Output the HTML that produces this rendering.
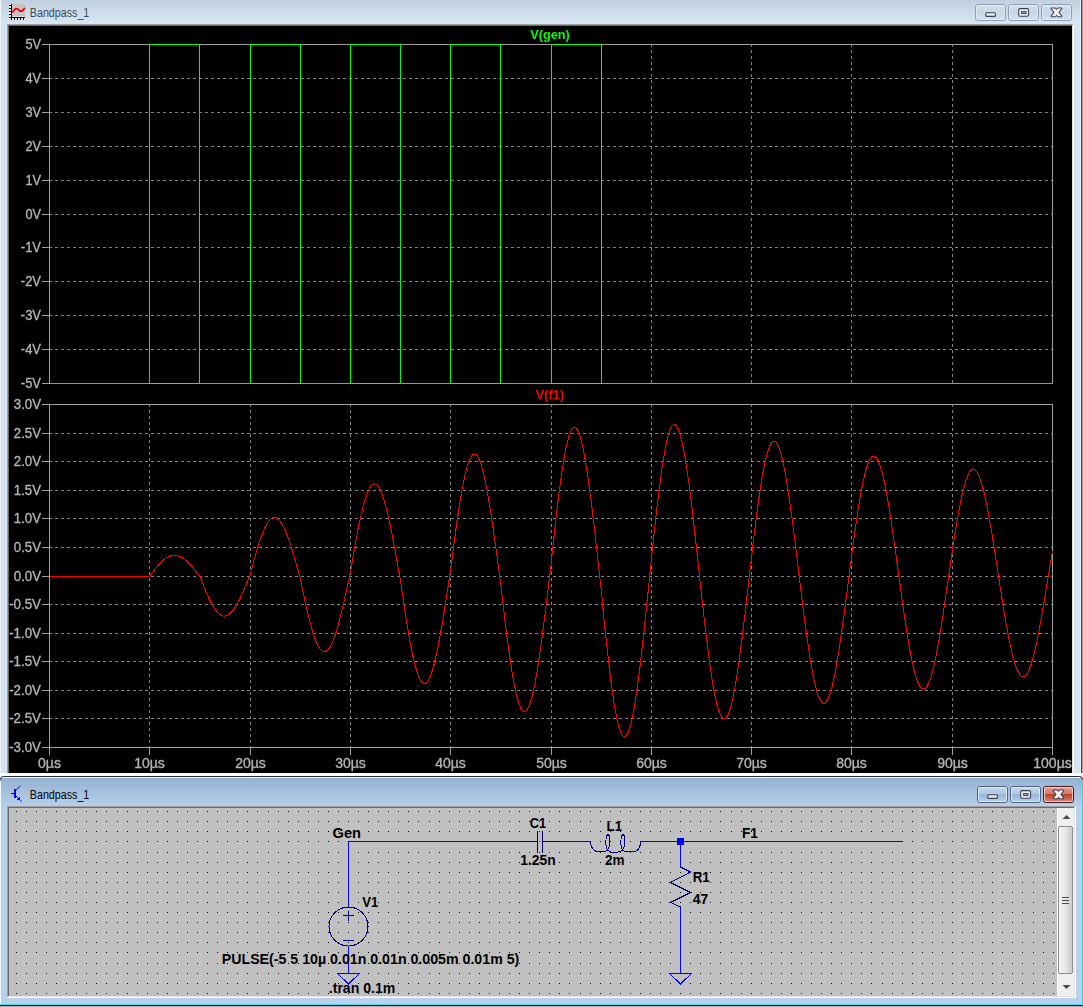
<!DOCTYPE html>
<html><head><meta charset="utf-8"><title>Bandpass_1</title>
<style>
html,body{margin:0;padding:0;width:1083px;height:1007px;overflow:hidden;background:#d6e3f1;}
svg{position:absolute;left:0;top:0;}
text{font-family:"Liberation Sans",sans-serif;}
</style></head><body>

<svg width="1083" height="1007" viewBox="0 0 1083 1007">
<defs>
<linearGradient id="tb1" x1="0" y1="0" x2="0" y2="1"><stop offset="0" stop-color="#c0d0df"/><stop offset="1" stop-color="#d9e6f3"/></linearGradient>
<linearGradient id="tb2" x1="0" y1="0" x2="0" y2="1"><stop offset="0" stop-color="#95b1d2"/><stop offset="1" stop-color="#b8d1ea"/></linearGradient>
<linearGradient id="btn1" x1="0" y1="0" x2="0" y2="1"><stop offset="0" stop-color="#d5e1ee"/><stop offset="0.5" stop-color="#c7d6e7"/><stop offset="1" stop-color="#d3e0ee"/></linearGradient>
<linearGradient id="btn2" x1="0" y1="0" x2="0" y2="1"><stop offset="0" stop-color="#c4d7ec"/><stop offset="0.45" stop-color="#b2cae5"/><stop offset="0.5" stop-color="#98b6d8"/><stop offset="1" stop-color="#b9d0ea"/></linearGradient>
<linearGradient id="btnc" x1="0" y1="0" x2="0" y2="1"><stop offset="0" stop-color="#e5a394"/><stop offset="0.45" stop-color="#d67a66"/><stop offset="0.5" stop-color="#c0402a"/><stop offset="1" stop-color="#d98b78"/></linearGradient>
<linearGradient id="thumb" x1="0" y1="0" x2="1" y2="0"><stop offset="0" stop-color="#f4f4f4"/><stop offset="0.5" stop-color="#e6e6e6"/><stop offset="1" stop-color="#c9c9cc"/></linearGradient>
</defs>
<g shape-rendering="crispEdges">
<rect x="0" y="0" width="1083" height="776" fill="#d6e3f1"/>
<rect x="0" y="0" width="1083" height="24" fill="url(#tb1)"/>
<rect x="0" y="0" width="1" height="776" fill="#eef1f6"/>
<rect x="1080" y="0" width="1" height="776" fill="#eef4fb"/>
<rect x="1081" y="0" width="1" height="776" fill="#404040"/>
<rect x="1082" y="0" width="1" height="776" fill="#aaaaaa"/>
<rect x="7" y="24" width="1067" height="752" fill="#ffffff"/>
<rect x="7" y="24" width="1066" height="751" fill="#a0a0a0"/>
<rect x="8" y="25" width="1065" height="750" fill="#e3e3e3"/>
<rect x="8" y="25" width="1064" height="749" fill="#696969"/>
<rect x="9" y="26" width="1063" height="747" fill="#000000"/>
</g>
<g shape-rendering="crispEdges">
<rect x="9" y="4" width="2" height="14" fill="#ececec"/>
<rect x="11" y="18" width="14" height="2" fill="#ececec"/>
<rect x="12" y="4" width="13" height="13" fill="#c3c3c3"/>
<rect x="12" y="16" width="13" height="1" fill="#dcdcdc"/>
<rect x="11" y="4" width="1" height="14" fill="#000"/>
<rect x="9" y="17" width="16" height="1" fill="#000"/>
<rect x="9" y="5" width="2" height="1" fill="#000"/><rect x="9" y="8" width="2" height="1" fill="#000"/><rect x="9" y="11" width="2" height="1" fill="#000"/><rect x="9" y="14" width="2" height="1" fill="#000"/>
<rect x="11" y="18" width="1" height="2" fill="#000"/><rect x="14" y="18" width="1" height="2" fill="#000"/><rect x="17" y="18" width="1" height="2" fill="#000"/><rect x="20" y="18" width="1" height="2" fill="#000"/><rect x="23" y="18" width="1" height="2" fill="#000"/>
</g>
<polyline points="12,12.5 15.5,8.8 17.5,8.8 20,11 22,11 25,8" fill="none" stroke="#ff0000" stroke-width="1.8"/>

<text x="29.8" y="17" font-size="12" fill="#3d4a5a" textLength="59.5" lengthAdjust="spacingAndGlyphs">Bandpass_1</text>
<rect x="975.5" y="4.5" width="30" height="16" rx="2.5" fill="url(#btn1)" stroke="#8c9db6" stroke-width="1"/><rect x="976.5" y="5.5" width="28" height="14" rx="1.5" fill="none" stroke="rgba(240,245,252,0.6)" stroke-width="1"/><rect x="1008.5" y="4.5" width="30" height="16" rx="2.5" fill="url(#btn1)" stroke="#8c9db6" stroke-width="1"/><rect x="1009.5" y="5.5" width="28" height="14" rx="1.5" fill="none" stroke="rgba(240,245,252,0.6)" stroke-width="1"/><rect x="1041.5" y="4.5" width="30" height="16" rx="2.5" fill="url(#btn1)" stroke="#8c9db6" stroke-width="1"/><rect x="1042.5" y="5.5" width="28" height="14" rx="1.5" fill="none" stroke="rgba(240,245,252,0.6)" stroke-width="1"/><rect x="985.8" y="12.8" width="9.6" height="3.6" rx="1" fill="#ececec" stroke="#3a4252" stroke-width="1.1"/><rect x="1018.7" y="8.6" width="9.8" height="7.6" rx="1.2" fill="#f0f0f0" stroke="#3a4252" stroke-width="1.1"/><rect x="1021.6" y="11.6" width="4.4" height="2" fill="#9bb3cf" stroke="#3a4252" stroke-width="1"/><g stroke="#3a4252" stroke-width="2" stroke-linejoin="round" fill="#3a4252"><polygon points="1051.55,8.55 1055.15,8.55 1061.35,16.15 1057.75,16.15"/><polygon points="1061.35,8.55 1057.75,8.55 1051.55,16.15 1055.15,16.15"/></g><g fill="#f6f6f6"><polygon points="1051.55,8.55 1055.15,8.55 1061.35,16.15 1057.75,16.15"/><polygon points="1061.35,8.55 1057.75,8.55 1051.55,16.15 1055.15,16.15"/></g>
<g shape-rendering="crispEdges">
<line x1="49" y1="78.5" x2="1052" y2="78.5" stroke="#808080" stroke-dasharray="3,3"/>
<line x1="49" y1="112.5" x2="1052" y2="112.5" stroke="#808080" stroke-dasharray="3,3"/>
<line x1="49" y1="146.5" x2="1052" y2="146.5" stroke="#808080" stroke-dasharray="3,3"/>
<line x1="49" y1="180.5" x2="1052" y2="180.5" stroke="#808080" stroke-dasharray="3,3"/>
<line x1="49" y1="214.5" x2="1052" y2="214.5" stroke="#808080" stroke-dasharray="3,3"/>
<line x1="49" y1="247.5" x2="1052" y2="247.5" stroke="#808080" stroke-dasharray="3,3"/>
<line x1="49" y1="281.5" x2="1052" y2="281.5" stroke="#808080" stroke-dasharray="3,3"/>
<line x1="49" y1="315.5" x2="1052" y2="315.5" stroke="#808080" stroke-dasharray="3,3"/>
<line x1="49" y1="349.5" x2="1052" y2="349.5" stroke="#808080" stroke-dasharray="3,3"/>
<line x1="149.5" y1="44" x2="149.5" y2="383" stroke="#808080" stroke-dasharray="3,3"/>
<line x1="250.5" y1="44" x2="250.5" y2="383" stroke="#808080" stroke-dasharray="3,3"/>
<line x1="350.5" y1="44" x2="350.5" y2="383" stroke="#808080" stroke-dasharray="3,3"/>
<line x1="450.5" y1="44" x2="450.5" y2="383" stroke="#808080" stroke-dasharray="3,3"/>
<line x1="551.5" y1="44" x2="551.5" y2="383" stroke="#808080" stroke-dasharray="3,3"/>
<line x1="651.5" y1="44" x2="651.5" y2="383" stroke="#808080" stroke-dasharray="3,3"/>
<line x1="751.5" y1="44" x2="751.5" y2="383" stroke="#808080" stroke-dasharray="3,3"/>
<line x1="851.5" y1="44" x2="851.5" y2="383" stroke="#808080" stroke-dasharray="3,3"/>
<line x1="952.5" y1="44" x2="952.5" y2="383" stroke="#808080" stroke-dasharray="3,3"/>
<rect x="49.5" y="44.5" width="1003" height="339" fill="none" stroke="#a0a0a0"/>
<line x1="42" y1="44.5" x2="49" y2="44.5" stroke="#a0a0a0"/>
<line x1="42" y1="78.5" x2="49" y2="78.5" stroke="#a0a0a0"/>
<line x1="42" y1="112.5" x2="49" y2="112.5" stroke="#a0a0a0"/>
<line x1="42" y1="146.5" x2="49" y2="146.5" stroke="#a0a0a0"/>
<line x1="42" y1="180.5" x2="49" y2="180.5" stroke="#a0a0a0"/>
<line x1="42" y1="214.5" x2="49" y2="214.5" stroke="#a0a0a0"/>
<line x1="42" y1="247.5" x2="49" y2="247.5" stroke="#a0a0a0"/>
<line x1="42" y1="281.5" x2="49" y2="281.5" stroke="#a0a0a0"/>
<line x1="42" y1="315.5" x2="49" y2="315.5" stroke="#a0a0a0"/>
<line x1="42" y1="349.5" x2="49" y2="349.5" stroke="#a0a0a0"/>
<line x1="42" y1="383.5" x2="49" y2="383.5" stroke="#a0a0a0"/>
<line x1="49" y1="433.5" x2="1052" y2="433.5" stroke="#808080" stroke-dasharray="3,3"/>
<line x1="49" y1="461.5" x2="1052" y2="461.5" stroke="#808080" stroke-dasharray="3,3"/>
<line x1="49" y1="490.5" x2="1052" y2="490.5" stroke="#808080" stroke-dasharray="3,3"/>
<line x1="49" y1="518.5" x2="1052" y2="518.5" stroke="#808080" stroke-dasharray="3,3"/>
<line x1="49" y1="547.5" x2="1052" y2="547.5" stroke="#808080" stroke-dasharray="3,3"/>
<line x1="49" y1="576.5" x2="1052" y2="576.5" stroke="#808080" stroke-dasharray="3,3"/>
<line x1="49" y1="604.5" x2="1052" y2="604.5" stroke="#808080" stroke-dasharray="3,3"/>
<line x1="49" y1="633.5" x2="1052" y2="633.5" stroke="#808080" stroke-dasharray="3,3"/>
<line x1="49" y1="661.5" x2="1052" y2="661.5" stroke="#808080" stroke-dasharray="3,3"/>
<line x1="49" y1="690.5" x2="1052" y2="690.5" stroke="#808080" stroke-dasharray="3,3"/>
<line x1="49" y1="718.5" x2="1052" y2="718.5" stroke="#808080" stroke-dasharray="3,3"/>
<line x1="149.5" y1="404" x2="149.5" y2="747" stroke="#808080" stroke-dasharray="3,3"/>
<line x1="250.5" y1="404" x2="250.5" y2="747" stroke="#808080" stroke-dasharray="3,3"/>
<line x1="350.5" y1="404" x2="350.5" y2="747" stroke="#808080" stroke-dasharray="3,3"/>
<line x1="450.5" y1="404" x2="450.5" y2="747" stroke="#808080" stroke-dasharray="3,3"/>
<line x1="551.5" y1="404" x2="551.5" y2="747" stroke="#808080" stroke-dasharray="3,3"/>
<line x1="651.5" y1="404" x2="651.5" y2="747" stroke="#808080" stroke-dasharray="3,3"/>
<line x1="751.5" y1="404" x2="751.5" y2="747" stroke="#808080" stroke-dasharray="3,3"/>
<line x1="851.5" y1="404" x2="851.5" y2="747" stroke="#808080" stroke-dasharray="3,3"/>
<line x1="952.5" y1="404" x2="952.5" y2="747" stroke="#808080" stroke-dasharray="3,3"/>
<rect x="49.5" y="404.5" width="1003" height="343" fill="none" stroke="#a0a0a0"/>
<line x1="42" y1="404.5" x2="49" y2="404.5" stroke="#a0a0a0"/>
<line x1="42" y1="433.5" x2="49" y2="433.5" stroke="#a0a0a0"/>
<line x1="42" y1="461.5" x2="49" y2="461.5" stroke="#a0a0a0"/>
<line x1="42" y1="490.5" x2="49" y2="490.5" stroke="#a0a0a0"/>
<line x1="42" y1="518.5" x2="49" y2="518.5" stroke="#a0a0a0"/>
<line x1="42" y1="547.5" x2="49" y2="547.5" stroke="#a0a0a0"/>
<line x1="42" y1="576.5" x2="49" y2="576.5" stroke="#a0a0a0"/>
<line x1="42" y1="604.5" x2="49" y2="604.5" stroke="#a0a0a0"/>
<line x1="42" y1="633.5" x2="49" y2="633.5" stroke="#a0a0a0"/>
<line x1="42" y1="661.5" x2="49" y2="661.5" stroke="#a0a0a0"/>
<line x1="42" y1="690.5" x2="49" y2="690.5" stroke="#a0a0a0"/>
<line x1="42" y1="718.5" x2="49" y2="718.5" stroke="#a0a0a0"/>
<line x1="42" y1="747.5" x2="49" y2="747.5" stroke="#a0a0a0"/>
<line x1="49.5" y1="747" x2="49.5" y2="755" stroke="#a0a0a0"/>
<line x1="149.5" y1="747" x2="149.5" y2="755" stroke="#a0a0a0"/>
<line x1="250.5" y1="747" x2="250.5" y2="755" stroke="#a0a0a0"/>
<line x1="350.5" y1="747" x2="350.5" y2="755" stroke="#a0a0a0"/>
<line x1="450.5" y1="747" x2="450.5" y2="755" stroke="#a0a0a0"/>
<line x1="551.5" y1="747" x2="551.5" y2="755" stroke="#a0a0a0"/>
<line x1="651.5" y1="747" x2="651.5" y2="755" stroke="#a0a0a0"/>
<line x1="751.5" y1="747" x2="751.5" y2="755" stroke="#a0a0a0"/>
<line x1="851.5" y1="747" x2="851.5" y2="755" stroke="#a0a0a0"/>
<line x1="952.5" y1="747" x2="952.5" y2="755" stroke="#a0a0a0"/>
<line x1="1052.5" y1="747" x2="1052.5" y2="755" stroke="#a0a0a0"/>
</g>
<polyline shape-rendering="crispEdges" fill="none" stroke="#00ff00" stroke-width="1" points="49.5,383.5 149.5,383.5 149.5,44.5 199.5,44.5 199.5,383.5 250.5,383.5 250.5,44.5 300.5,44.5 300.5,383.5 350.5,383.5 350.5,44.5 400.5,44.5 400.5,383.5 450.5,383.5 450.5,44.5 500.5,44.5 500.5,383.5 551.5,383.5 551.5,44.5 601.5,44.5 601.5,383.5 1052.5,383.5"/>
<polyline fill="none" stroke="#ff0000" stroke-width="1" shape-rendering="crispEdges" points="49.50,576.00 50.50,576.00 51.51,576.00 52.51,576.00 53.51,576.00 54.52,576.00 55.52,576.00 56.52,576.00 57.52,576.00 58.53,576.00 59.53,576.00 60.53,576.00 61.54,576.00 62.54,576.00 63.54,576.00 64.55,576.00 65.55,576.00 66.55,576.00 67.55,576.00 68.56,576.00 69.56,576.00 70.56,576.00 71.57,576.00 72.57,576.00 73.57,576.00 74.58,576.00 75.58,576.00 76.58,576.00 77.58,576.00 78.59,576.00 79.59,576.00 80.59,576.00 81.60,576.00 82.60,576.00 83.60,576.00 84.61,576.00 85.61,576.00 86.61,576.00 87.61,576.00 88.62,576.00 89.62,576.00 90.62,576.00 91.63,576.00 92.63,576.00 93.63,576.00 94.63,576.00 95.64,576.00 96.64,576.00 97.64,576.00 98.65,576.00 99.65,576.00 100.65,576.00 101.66,576.00 102.66,576.00 103.66,576.00 104.67,576.00 105.67,576.00 106.67,576.00 107.67,576.00 108.68,576.00 109.68,576.00 110.68,576.00 111.69,576.00 112.69,576.00 113.69,576.00 114.70,576.00 115.70,576.00 116.70,576.00 117.70,576.00 118.71,576.00 119.71,576.00 120.71,576.00 121.72,576.00 122.72,576.00 123.72,576.00 124.72,576.00 125.73,576.00 126.73,576.00 127.73,576.00 128.74,576.00 129.74,576.00 130.74,576.00 131.75,576.00 132.75,576.00 133.75,576.00 134.75,576.00 135.76,576.00 136.76,576.00 137.76,576.00 138.77,576.00 139.77,576.00 140.77,576.00 141.78,576.00 142.78,576.00 143.78,576.00 144.78,576.00 145.79,576.00 146.79,576.00 147.79,576.00 148.80,576.00 149.80,576.00 150.80,574.66 151.81,573.33 152.81,572.01 153.81,570.71 154.81,569.43 155.82,568.19 156.82,566.97 157.82,565.80 158.83,564.67 159.83,563.59 160.83,562.56 161.84,561.59 162.84,560.67 163.84,559.82 164.84,559.04 165.85,558.32 166.85,557.68 167.85,557.12 168.86,556.63 169.86,556.21 170.86,555.88 171.87,555.63 172.87,555.46 173.87,555.37 174.88,555.37 175.88,555.45 176.88,555.61 177.88,555.85 178.89,556.17 179.89,556.57 180.89,557.05 181.90,557.60 182.90,558.22 183.90,558.92 184.91,559.68 185.91,560.50 186.91,561.38 187.91,562.32 188.92,563.31 189.92,564.35 190.92,565.44 191.93,566.56 192.93,567.72 193.93,568.91 194.94,570.12 195.94,571.36 196.94,572.61 197.94,573.87 198.95,575.14 199.95,576.40 200.95,579.01 201.96,581.59 202.96,584.15 203.96,586.67 204.97,589.14 205.97,591.55 206.97,593.90 207.97,596.16 208.98,598.34 209.98,600.43 210.98,602.42 211.99,604.29 212.99,606.05 213.99,607.68 215.00,609.18 216.00,610.55 217.00,611.77 218.00,612.85 219.01,613.78 220.01,614.56 221.01,615.18 222.02,615.64 223.02,615.95 224.02,616.09 225.03,616.07 226.03,615.90 227.03,615.56 228.03,615.07 229.04,614.42 230.04,613.62 231.04,612.67 232.05,611.58 233.05,610.34 234.05,608.98 235.06,607.48 236.06,605.87 237.06,604.13 238.06,602.29 239.07,600.35 240.07,598.31 241.07,596.20 242.08,594.00 243.08,591.74 244.08,589.42 245.09,587.05 246.09,584.65 247.09,582.21 248.09,579.76 249.10,577.30 250.10,574.84 251.10,571.04 252.11,567.28 253.11,563.56 254.11,559.90 255.12,556.31 256.12,552.81 257.12,549.40 258.12,546.12 259.13,542.96 260.13,539.94 261.13,537.07 262.14,534.36 263.14,531.83 264.14,529.47 265.14,527.31 266.15,525.35 267.15,523.60 268.15,522.06 269.16,520.74 270.16,519.64 271.16,518.77 272.17,518.13 273.17,517.72 274.17,517.55 275.18,517.61 276.18,517.90 277.18,518.43 278.18,519.18 279.19,520.16 280.19,521.36 281.19,522.77 282.20,524.40 283.20,526.22 284.20,528.24 285.21,530.45 286.21,532.84 287.21,535.39 288.21,538.09 289.22,540.95 290.22,543.93 291.22,547.04 292.23,550.25 293.23,553.56 294.23,556.95 295.24,560.41 296.24,563.93 297.24,567.48 298.24,571.06 299.25,574.65 300.25,578.24 301.25,583.15 302.26,588.02 303.26,592.83 304.26,597.57 305.27,602.20 306.27,606.72 307.27,611.11 308.27,615.35 309.28,619.42 310.28,623.31 311.28,626.99 312.29,630.47 313.29,633.72 314.29,636.73 315.30,639.50 316.30,642.00 317.30,644.23 318.30,646.19 319.31,647.86 320.31,649.24 321.31,650.32 322.32,651.11 323.32,651.59 324.32,651.77 325.32,651.65 326.33,651.22 327.33,650.50 328.33,649.48 329.34,648.16 330.34,646.57 331.34,644.69 332.35,642.55 333.35,640.14 334.35,637.49 335.36,634.59 336.36,631.47 337.36,628.13 338.36,624.59 339.37,620.87 340.37,616.98 341.37,612.93 342.38,608.74 343.38,604.44 344.38,600.03 345.39,595.53 346.39,590.97 347.39,586.36 348.39,581.71 349.40,577.06 350.40,572.41 351.40,566.44 352.41,560.53 353.41,554.70 354.41,548.96 355.42,543.34 356.42,537.87 357.42,532.56 358.42,527.44 359.43,522.53 360.43,517.84 361.43,513.39 362.44,509.20 363.44,505.29 364.44,501.68 365.44,498.36 366.45,495.37 367.45,492.70 368.45,490.38 369.46,488.40 370.46,486.77 371.46,485.51 372.47,484.61 373.47,484.07 374.47,483.91 375.48,484.11 376.48,484.68 377.48,485.61 378.48,486.91 379.49,488.55 380.49,490.54 381.49,492.87 382.50,495.52 383.50,498.49 384.50,501.76 385.50,505.32 386.51,509.16 387.51,513.25 388.51,517.58 389.52,522.14 390.52,526.90 391.52,531.84 392.53,536.95 393.53,542.21 394.53,547.58 395.54,553.06 396.54,558.62 397.54,564.23 398.54,569.88 399.55,575.54 400.55,581.18 401.55,588.14 402.56,595.03 403.56,601.82 404.56,608.50 405.56,615.03 406.57,621.39 407.57,627.56 408.57,633.50 409.58,639.20 410.58,644.64 411.58,649.78 412.59,654.62 413.59,659.14 414.59,663.31 415.60,667.13 416.60,670.57 417.60,673.63 418.60,676.28 419.61,678.54 420.61,680.37 421.61,681.79 422.62,682.78 423.62,683.34 424.62,683.47 425.62,683.17 426.63,682.45 427.63,681.30 428.63,679.73 429.64,677.75 430.64,675.37 431.64,672.60 432.65,669.45 433.65,665.94 434.65,662.07 435.65,657.87 436.66,653.35 437.66,648.53 438.66,643.44 439.67,638.09 440.67,632.50 441.67,626.70 442.68,620.71 443.68,614.55 444.68,608.26 445.69,601.85 446.69,595.36 447.69,588.80 448.69,582.21 449.70,575.60 450.70,569.02 451.70,561.13 452.71,553.33 453.71,545.63 454.71,538.07 455.71,530.69 456.72,523.50 457.72,516.53 458.72,509.82 459.73,503.39 460.73,497.27 461.73,491.47 462.74,486.03 463.74,480.96 464.74,476.28 465.75,472.01 466.75,468.16 467.75,464.75 468.75,461.80 469.76,459.31 470.76,457.29 471.76,455.75 472.77,454.69 473.77,454.12 474.77,454.04 475.77,454.45 476.78,455.34 477.78,456.71 478.78,458.55 479.79,460.86 480.79,463.63 481.79,466.83 482.80,470.46 483.80,474.51 484.80,478.95 485.81,483.77 486.81,488.95 487.81,494.46 488.81,500.29 489.82,506.40 490.82,512.78 491.82,519.39 492.83,526.22 493.83,533.23 494.83,540.39 495.84,547.68 496.84,555.06 497.84,562.51 498.84,570.00 499.85,577.49 500.85,584.96 501.85,593.72 502.86,602.38 503.86,610.93 504.86,619.31 505.87,627.49 506.87,635.46 507.87,643.16 508.87,650.58 509.88,657.69 510.88,664.45 511.88,670.84 512.89,676.84 513.89,682.43 514.89,687.57 515.90,692.26 516.90,696.47 517.90,700.19 518.90,703.41 519.91,706.10 520.91,708.28 521.91,709.92 522.92,711.02 523.92,711.58 524.92,711.59 525.92,711.07 526.93,710.01 527.93,708.41 528.93,706.29 529.94,703.65 530.94,700.51 531.94,696.88 532.95,692.78 533.95,688.22 534.95,683.22 535.95,677.80 536.96,671.99 537.96,665.81 538.96,659.29 539.97,652.45 540.97,645.32 541.97,637.93 542.98,630.31 543.98,622.49 544.98,614.51 545.99,606.38 546.99,598.16 547.99,589.87 548.99,581.54 550.00,573.21 551.00,564.91 552.00,555.33 553.01,545.86 554.01,536.53 555.01,527.38 556.01,518.44 557.02,509.76 558.02,501.36 559.02,493.28 560.03,485.55 561.03,478.19 562.03,471.25 563.04,464.74 564.04,458.69 565.04,453.12 566.05,448.06 567.05,443.52 568.05,439.52 569.05,436.07 570.06,433.19 571.06,430.89 572.06,429.17 573.07,428.04 574.07,427.51 575.07,427.57 576.08,428.23 577.08,429.47 578.08,431.29 579.08,433.69 580.09,436.65 581.09,440.16 582.09,444.21 583.10,448.77 584.10,453.83 585.10,459.36 586.11,465.35 587.11,471.77 588.11,478.59 589.11,485.78 590.12,493.31 591.12,501.16 592.12,509.28 593.13,517.66 594.13,526.25 595.13,535.01 596.13,543.92 597.14,552.94 598.14,562.03 599.14,571.15 600.15,580.27 601.15,589.35 602.15,599.70 603.16,609.93 604.16,620.00 605.16,629.87 606.16,639.50 607.17,648.85 608.17,657.89 609.17,666.59 610.18,674.90 611.18,682.80 612.18,690.25 613.19,697.23 614.19,703.71 615.19,709.66 616.20,715.07 617.20,719.90 618.20,724.15 619.20,727.80 620.21,730.84 621.21,733.25 622.21,735.02 623.22,736.16 624.22,736.65 625.22,736.50 626.23,735.71 627.23,734.28 628.23,732.23 629.23,729.56 630.24,726.27 631.24,722.40 632.24,717.95 633.25,712.95 634.25,707.40 635.25,701.35 636.26,694.81 637.26,687.81 638.26,680.39 639.26,672.56 640.27,664.36 641.27,655.83 642.27,647.01 643.28,637.91 644.28,628.60 645.28,619.09 646.28,609.44 647.29,599.67 648.29,589.84 649.29,579.97 650.30,570.10 651.30,560.29 652.30,550.56 653.31,540.95 654.31,531.51 655.31,522.27 656.32,513.26 657.32,504.53 658.32,496.10 659.32,488.01 660.33,480.29 661.33,472.97 662.33,466.08 663.34,459.65 664.34,453.69 665.34,448.24 666.35,443.31 667.35,438.92 668.35,435.09 669.35,431.83 670.36,429.15 671.36,427.07 672.36,425.59 673.37,424.71 674.37,424.44 675.37,424.77 676.38,425.71 677.38,427.24 678.38,429.37 679.38,432.08 680.39,435.35 681.39,439.18 682.39,443.55 683.40,448.43 684.40,453.81 685.40,459.67 686.40,465.98 687.41,472.72 688.41,479.85 689.41,487.34 690.42,495.18 691.42,503.32 692.42,511.73 693.43,520.37 694.43,529.22 695.43,538.24 696.44,547.38 697.44,556.62 698.44,565.91 699.44,575.22 700.45,584.52 701.45,593.75 702.45,602.90 703.46,611.91 704.46,620.76 705.46,629.42 706.47,637.83 707.47,645.98 708.47,653.84 709.47,661.36 710.48,668.52 711.48,675.30 712.48,681.67 713.49,687.60 714.49,693.06 715.49,698.05 716.50,702.54 717.50,706.52 718.50,709.96 719.50,712.86 720.51,715.20 721.51,716.99 722.51,718.21 723.52,718.85 724.52,718.93 725.52,718.43 726.52,717.37 727.53,715.74 728.53,713.56 729.53,710.84 730.54,707.58 731.54,703.80 732.54,699.53 733.55,694.77 734.55,689.55 735.55,683.88 736.55,677.80 737.56,671.33 738.56,664.49 739.56,657.31 740.57,649.82 741.57,642.06 742.57,634.05 743.58,625.83 744.58,617.43 745.58,608.89 746.59,600.23 747.59,591.49 748.59,582.72 749.59,573.94 750.60,565.18 751.60,556.50 752.60,547.90 753.61,539.45 754.61,531.15 755.61,523.06 756.62,515.20 757.62,507.59 758.62,500.28 759.62,493.29 760.63,486.65 761.63,480.37 762.63,474.50 763.64,469.04 764.64,464.02 765.64,459.47 766.64,455.39 767.65,451.80 768.65,448.71 769.65,446.14 770.66,444.09 771.66,442.58 772.66,441.60 773.67,441.17 774.67,441.27 775.67,441.91 776.67,443.08 777.68,444.78 778.68,447.00 779.68,449.73 780.69,452.96 781.69,456.68 782.69,460.86 783.70,465.49 784.70,470.55 785.70,476.02 786.71,481.88 787.71,488.10 788.71,494.65 789.71,501.52 790.72,508.67 791.72,516.07 792.72,523.69 793.73,531.50 794.73,539.47 795.73,547.57 796.74,555.76 797.74,564.02 798.74,572.30 799.74,580.58 800.75,588.82 801.75,596.99 802.75,605.06 803.76,612.99 804.76,620.76 805.76,628.33 806.76,635.67 807.77,642.76 808.77,649.56 809.77,656.05 810.78,662.21 811.78,668.01 812.78,673.43 813.79,678.45 814.79,683.04 815.79,687.20 816.79,690.90 817.80,694.14 818.80,696.90 819.80,699.16 820.81,700.94 821.81,702.20 822.81,702.96 823.82,703.21 824.82,702.96 825.82,702.19 826.83,700.93 827.83,699.16 828.83,696.91 829.83,694.19 830.84,690.99 831.84,687.35 832.84,683.27 833.85,678.77 834.85,673.87 835.85,668.59 836.86,662.95 837.86,656.98 838.86,650.70 839.86,644.14 840.87,637.32 841.87,630.27 842.87,623.02 843.88,615.60 844.88,608.04 845.88,600.36 846.89,592.61 847.89,584.82 848.89,577.00 849.89,569.20 850.90,561.44 851.90,553.76 852.90,546.19 853.91,538.76 854.91,531.49 855.91,524.41 856.91,517.56 857.92,510.96 858.92,504.63 859.92,498.60 860.93,492.90 861.93,487.54 862.93,482.55 863.94,477.94 864.94,473.73 865.94,469.95 866.95,466.59 867.95,463.68 868.95,461.23 869.95,459.24 870.96,457.72 871.96,456.67 872.96,456.11 873.97,456.03 874.97,456.42 875.97,457.29 876.98,458.64 877.98,460.45 878.98,462.71 879.98,465.43 880.99,468.58 881.99,472.15 882.99,476.13 884.00,480.49 885.00,485.23 886.00,490.32 887.01,495.74 888.01,501.47 889.01,507.48 890.01,513.75 891.02,520.26 892.02,526.97 893.02,533.86 894.03,540.91 895.03,548.08 896.03,555.34 897.04,562.67 898.04,570.03 899.04,577.40 900.04,584.75 901.05,592.05 902.05,599.26 903.05,606.37 904.06,613.34 905.06,620.14 906.06,626.75 907.07,633.14 908.07,639.29 909.07,645.17 910.07,650.76 911.08,656.04 912.08,660.98 913.08,665.58 914.09,669.81 915.09,673.65 916.09,677.09 917.10,680.13 918.10,682.73 919.10,684.91 920.10,686.65 921.11,687.94 922.11,688.78 923.11,689.17 924.12,689.10 925.12,688.59 926.12,687.62 927.12,686.21 928.13,684.37 929.13,682.09 930.13,679.40 931.14,676.30 932.14,672.81 933.14,668.94 934.15,664.71 935.15,660.13 936.15,655.23 937.16,650.02 938.16,644.53 939.16,638.78 940.16,632.79 941.17,626.59 942.17,620.20 943.17,613.65 944.18,606.96 945.18,600.17 946.18,593.29 947.18,586.37 948.19,579.41 949.19,572.46 950.19,565.55 951.20,558.68 952.20,551.91 953.20,545.25 954.21,538.72 955.21,532.36 956.21,526.19 957.22,520.23 958.22,514.51 959.22,509.05 960.22,503.86 961.23,498.98 962.23,494.42 963.23,490.19 964.24,486.32 965.24,482.81 966.24,479.69 967.25,476.95 968.25,474.62 969.25,472.70 970.25,471.19 971.26,470.11 972.26,469.45 973.26,469.22 974.27,469.42 975.27,470.04 976.27,471.09 977.28,472.55 978.28,474.42 979.28,476.69 980.28,479.35 981.29,482.40 982.29,485.81 983.29,489.57 984.30,493.67 985.30,498.08 986.30,502.80 987.31,507.80 988.31,513.06 989.31,518.56 990.31,524.27 991.32,530.18 992.32,536.26 993.32,542.48 994.33,548.83 995.33,555.26 996.33,561.76 997.34,568.31 998.34,574.87 999.34,581.42 1000.34,587.93 1001.35,594.38 1002.35,600.74 1003.35,606.99 1004.36,613.09 1005.36,619.04 1006.36,624.80 1007.37,630.35 1008.37,635.67 1009.37,640.74 1010.37,645.54 1011.38,650.06 1012.38,654.26 1013.38,658.14 1014.39,661.69 1015.39,664.88 1016.39,667.72 1017.39,670.17 1018.40,672.25 1019.40,673.94 1020.40,675.23 1021.41,676.13 1022.41,676.62 1023.41,676.71 1024.42,676.39 1025.42,675.68 1026.42,674.57 1027.43,673.07 1028.43,671.18 1029.43,668.92 1030.43,666.29 1031.44,663.31 1032.44,659.99 1033.44,656.33 1034.45,652.37 1035.45,648.11 1036.45,643.57 1037.46,638.78 1038.46,633.74 1039.46,628.49 1040.46,623.04 1041.47,617.41 1042.47,611.63 1043.47,605.72 1044.48,599.71 1045.48,593.62 1046.48,587.47 1047.49,581.28 1048.49,575.10 1049.49,568.93 1050.49,562.80 1051.50,556.74 1052.50,550.77"/>
<g shape-rendering="crispEdges">
<rect x="0" y="773" width="1083" height="3" fill="#ffffff"/>
<path d="M0,1007 L0,780 L4,776 L1079,776 L1083,780 L1083,1007 Z" fill="#b9d1ea"/>
<rect x="0" y="778" width="1083" height="29" fill="url(#tb2)"/>
<rect x="3" y="777" width="1077" height="1" fill="#eef5fc"/>
</g>
<path d="M0.5,780 L0.5,779.5 Q0.5,776.5 3.5,776.5 L1079.5,776.5 Q1082.5,776.5 1082.5,779.5 L1082.5,780" fill="none" stroke="#2a2f36" stroke-width="1"/>
<g shape-rendering="crispEdges">
<rect x="0" y="781" width="1" height="223" fill="#f4f7fb"/>
<rect x="1082" y="781" width="1" height="224" fill="#33d2f0"/>
<rect x="0" y="1004" width="1083" height="1" fill="#3fdcf4"/>
<rect x="0" y="1005" width="1083" height="1" fill="#111111"/>
<rect x="0" y="1006" width="1083" height="1" fill="#a8a8a8"/>
<rect x="7" y="806" width="1069" height="192" fill="#ffffff"/>
<rect x="7" y="806" width="1068" height="191" fill="#a0a0a0"/>
<rect x="8" y="807" width="1067" height="190" fill="#e3e3e3"/>
<rect x="8" y="807" width="1066" height="189" fill="#696969"/>
<rect x="9" y="808" width="1048" height="188" fill="#c0c0c0"/>
<rect x="1057" y="808" width="17" height="188" fill="#efefef"/>
<rect x="1057" y="808" width="1" height="188" fill="#fbfbfb"/>
<rect x="1058.5" y="826.5" width="14" height="147" rx="2" fill="url(#thumb)" stroke="#8e8e8e"/>
</g>
<path d="M1062.5,819 L1066.5,815 L1070.5,819 Z" fill="#4a4a4a"/>
<path d="M1062.5,985 L1066.5,989 L1070.5,985 Z" fill="#4a4a4a"/>
<g shape-rendering="crispEdges" fill="#4a4a4a"><rect x="1062" y="897" width="7" height="1"/><rect x="1062" y="900" width="7" height="1"/><rect x="1062" y="903" width="7" height="1"/></g>
<g stroke="#0000ff" fill="none" stroke-width="1"><path d="M11,793.5 L15,793.5 M16,790 L20.5,786 M16,796 L21.5,801.5"/></g>
<g shape-rendering="crispEdges" fill="#0000ff"><rect x="14" y="789" width="2" height="9"/><rect x="18" y="798" width="2" height="2"/><rect x="19" y="797" width="1" height="1"/><rect x="17" y="799" width="2" height="1"/></g>
<text x="29.8" y="799" font-size="12" fill="#000000" textLength="59.5" lengthAdjust="spacingAndGlyphs">Bandpass_1</text>
<rect x="977.5" y="786.5" width="30" height="16" rx="2.5" fill="url(#btn2)" stroke="#4f6281" stroke-width="1"/><rect x="978.5" y="787.5" width="28" height="14" rx="1.5" fill="none" stroke="rgba(235,243,252,0.8)" stroke-width="1"/><rect x="1010.5" y="786.5" width="30" height="16" rx="2.5" fill="url(#btn2)" stroke="#4f6281" stroke-width="1"/><rect x="1011.5" y="787.5" width="28" height="14" rx="1.5" fill="none" stroke="rgba(235,243,252,0.8)" stroke-width="1"/><rect x="1043.5" y="786.5" width="30" height="16" rx="2.5" fill="url(#btnc)" stroke="#4a1322" stroke-width="1"/><rect x="1044.5" y="787.5" width="28" height="14" rx="1.5" fill="none" stroke="rgba(255,230,220,0.75)" stroke-width="1"/><rect x="987.8" y="794.8" width="9.6" height="3.6" rx="1" fill="#ececec" stroke="#3a4252" stroke-width="1.1"/><rect x="1020.7" y="790.6" width="9.8" height="7.6" rx="1.2" fill="#f0f0f0" stroke="#3a4252" stroke-width="1.1"/><rect x="1023.6" y="793.6" width="4.4" height="2" fill="#9bb3cf" stroke="#3a4252" stroke-width="1"/><g stroke="#3a4252" stroke-width="2" stroke-linejoin="round" fill="#3a4252"><polygon points="1053.55,790.55 1057.15,790.55 1063.35,798.15 1059.75,798.15"/><polygon points="1063.35,790.55 1059.75,790.55 1053.55,798.15 1057.15,798.15"/></g><g fill="#f6f6f6"><polygon points="1053.55,790.55 1057.15,790.55 1063.35,798.15 1059.75,798.15"/><polygon points="1063.35,790.55 1059.75,790.55 1053.55,798.15 1057.15,798.15"/></g>
<path shape-rendering="crispEdges" fill="#000" d="M16,811h1v1h-1zM26,811h1v1h-1zM36,811h1v1h-1zM46,811h1v1h-1zM56,811h1v1h-1zM66,811h1v1h-1zM76,811h1v1h-1zM86,811h1v1h-1zM96,811h1v1h-1zM106,811h1v1h-1zM117,811h1v1h-1zM127,811h1v1h-1zM137,811h1v1h-1zM147,811h1v1h-1zM157,811h1v1h-1zM167,811h1v1h-1zM177,811h1v1h-1zM187,811h1v1h-1zM197,811h1v1h-1zM207,811h1v1h-1zM217,811h1v1h-1zM227,811h1v1h-1zM237,811h1v1h-1zM247,811h1v1h-1zM257,811h1v1h-1zM268,811h1v1h-1zM278,811h1v1h-1zM288,811h1v1h-1zM298,811h1v1h-1zM308,811h1v1h-1zM318,811h1v1h-1zM328,811h1v1h-1zM338,811h1v1h-1zM348,811h1v1h-1zM358,811h1v1h-1zM368,811h1v1h-1zM378,811h1v1h-1zM388,811h1v1h-1zM398,811h1v1h-1zM408,811h1v1h-1zM418,811h1v1h-1zM429,811h1v1h-1zM439,811h1v1h-1zM449,811h1v1h-1zM459,811h1v1h-1zM469,811h1v1h-1zM479,811h1v1h-1zM489,811h1v1h-1zM499,811h1v1h-1zM509,811h1v1h-1zM519,811h1v1h-1zM529,811h1v1h-1zM539,811h1v1h-1zM549,811h1v1h-1zM559,811h1v1h-1zM569,811h1v1h-1zM580,811h1v1h-1zM590,811h1v1h-1zM600,811h1v1h-1zM610,811h1v1h-1zM620,811h1v1h-1zM630,811h1v1h-1zM640,811h1v1h-1zM650,811h1v1h-1zM660,811h1v1h-1zM670,811h1v1h-1zM680,811h1v1h-1zM690,811h1v1h-1zM700,811h1v1h-1zM710,811h1v1h-1zM720,811h1v1h-1zM731,811h1v1h-1zM741,811h1v1h-1zM751,811h1v1h-1zM761,811h1v1h-1zM771,811h1v1h-1zM781,811h1v1h-1zM791,811h1v1h-1zM801,811h1v1h-1zM811,811h1v1h-1zM821,811h1v1h-1zM831,811h1v1h-1zM841,811h1v1h-1zM851,811h1v1h-1zM861,811h1v1h-1zM871,811h1v1h-1zM882,811h1v1h-1zM892,811h1v1h-1zM902,811h1v1h-1zM912,811h1v1h-1zM922,811h1v1h-1zM932,811h1v1h-1zM942,811h1v1h-1zM952,811h1v1h-1zM962,811h1v1h-1zM972,811h1v1h-1zM982,811h1v1h-1zM992,811h1v1h-1zM1002,811h1v1h-1zM1012,811h1v1h-1zM1022,811h1v1h-1zM1033,811h1v1h-1zM1043,811h1v1h-1zM1053,811h1v1h-1zM16,821h1v1h-1zM26,821h1v1h-1zM36,821h1v1h-1zM46,821h1v1h-1zM56,821h1v1h-1zM66,821h1v1h-1zM76,821h1v1h-1zM86,821h1v1h-1zM96,821h1v1h-1zM106,821h1v1h-1zM117,821h1v1h-1zM127,821h1v1h-1zM137,821h1v1h-1zM147,821h1v1h-1zM157,821h1v1h-1zM167,821h1v1h-1zM177,821h1v1h-1zM187,821h1v1h-1zM197,821h1v1h-1zM207,821h1v1h-1zM217,821h1v1h-1zM227,821h1v1h-1zM237,821h1v1h-1zM247,821h1v1h-1zM257,821h1v1h-1zM268,821h1v1h-1zM278,821h1v1h-1zM288,821h1v1h-1zM298,821h1v1h-1zM308,821h1v1h-1zM318,821h1v1h-1zM328,821h1v1h-1zM338,821h1v1h-1zM348,821h1v1h-1zM358,821h1v1h-1zM368,821h1v1h-1zM378,821h1v1h-1zM388,821h1v1h-1zM398,821h1v1h-1zM408,821h1v1h-1zM418,821h1v1h-1zM429,821h1v1h-1zM439,821h1v1h-1zM449,821h1v1h-1zM459,821h1v1h-1zM469,821h1v1h-1zM479,821h1v1h-1zM489,821h1v1h-1zM499,821h1v1h-1zM509,821h1v1h-1zM519,821h1v1h-1zM529,821h1v1h-1zM539,821h1v1h-1zM549,821h1v1h-1zM559,821h1v1h-1zM569,821h1v1h-1zM580,821h1v1h-1zM590,821h1v1h-1zM600,821h1v1h-1zM610,821h1v1h-1zM620,821h1v1h-1zM630,821h1v1h-1zM640,821h1v1h-1zM650,821h1v1h-1zM660,821h1v1h-1zM670,821h1v1h-1zM680,821h1v1h-1zM690,821h1v1h-1zM700,821h1v1h-1zM710,821h1v1h-1zM720,821h1v1h-1zM731,821h1v1h-1zM741,821h1v1h-1zM751,821h1v1h-1zM761,821h1v1h-1zM771,821h1v1h-1zM781,821h1v1h-1zM791,821h1v1h-1zM801,821h1v1h-1zM811,821h1v1h-1zM821,821h1v1h-1zM831,821h1v1h-1zM841,821h1v1h-1zM851,821h1v1h-1zM861,821h1v1h-1zM871,821h1v1h-1zM882,821h1v1h-1zM892,821h1v1h-1zM902,821h1v1h-1zM912,821h1v1h-1zM922,821h1v1h-1zM932,821h1v1h-1zM942,821h1v1h-1zM952,821h1v1h-1zM962,821h1v1h-1zM972,821h1v1h-1zM982,821h1v1h-1zM992,821h1v1h-1zM1002,821h1v1h-1zM1012,821h1v1h-1zM1022,821h1v1h-1zM1033,821h1v1h-1zM1043,821h1v1h-1zM1053,821h1v1h-1zM16,831h1v1h-1zM26,831h1v1h-1zM36,831h1v1h-1zM46,831h1v1h-1zM56,831h1v1h-1zM66,831h1v1h-1zM76,831h1v1h-1zM86,831h1v1h-1zM96,831h1v1h-1zM106,831h1v1h-1zM117,831h1v1h-1zM127,831h1v1h-1zM137,831h1v1h-1zM147,831h1v1h-1zM157,831h1v1h-1zM167,831h1v1h-1zM177,831h1v1h-1zM187,831h1v1h-1zM197,831h1v1h-1zM207,831h1v1h-1zM217,831h1v1h-1zM227,831h1v1h-1zM237,831h1v1h-1zM247,831h1v1h-1zM257,831h1v1h-1zM268,831h1v1h-1zM278,831h1v1h-1zM288,831h1v1h-1zM298,831h1v1h-1zM308,831h1v1h-1zM318,831h1v1h-1zM328,831h1v1h-1zM338,831h1v1h-1zM348,831h1v1h-1zM358,831h1v1h-1zM368,831h1v1h-1zM378,831h1v1h-1zM388,831h1v1h-1zM398,831h1v1h-1zM408,831h1v1h-1zM418,831h1v1h-1zM429,831h1v1h-1zM439,831h1v1h-1zM449,831h1v1h-1zM459,831h1v1h-1zM469,831h1v1h-1zM479,831h1v1h-1zM489,831h1v1h-1zM499,831h1v1h-1zM509,831h1v1h-1zM519,831h1v1h-1zM529,831h1v1h-1zM539,831h1v1h-1zM549,831h1v1h-1zM559,831h1v1h-1zM569,831h1v1h-1zM580,831h1v1h-1zM590,831h1v1h-1zM600,831h1v1h-1zM610,831h1v1h-1zM620,831h1v1h-1zM630,831h1v1h-1zM640,831h1v1h-1zM650,831h1v1h-1zM660,831h1v1h-1zM670,831h1v1h-1zM680,831h1v1h-1zM690,831h1v1h-1zM700,831h1v1h-1zM710,831h1v1h-1zM720,831h1v1h-1zM731,831h1v1h-1zM741,831h1v1h-1zM751,831h1v1h-1zM761,831h1v1h-1zM771,831h1v1h-1zM781,831h1v1h-1zM791,831h1v1h-1zM801,831h1v1h-1zM811,831h1v1h-1zM821,831h1v1h-1zM831,831h1v1h-1zM841,831h1v1h-1zM851,831h1v1h-1zM861,831h1v1h-1zM871,831h1v1h-1zM882,831h1v1h-1zM892,831h1v1h-1zM902,831h1v1h-1zM912,831h1v1h-1zM922,831h1v1h-1zM932,831h1v1h-1zM942,831h1v1h-1zM952,831h1v1h-1zM962,831h1v1h-1zM972,831h1v1h-1zM982,831h1v1h-1zM992,831h1v1h-1zM1002,831h1v1h-1zM1012,831h1v1h-1zM1022,831h1v1h-1zM1033,831h1v1h-1zM1043,831h1v1h-1zM1053,831h1v1h-1zM16,841h1v1h-1zM26,841h1v1h-1zM36,841h1v1h-1zM46,841h1v1h-1zM56,841h1v1h-1zM66,841h1v1h-1zM76,841h1v1h-1zM86,841h1v1h-1zM96,841h1v1h-1zM106,841h1v1h-1zM117,841h1v1h-1zM127,841h1v1h-1zM137,841h1v1h-1zM147,841h1v1h-1zM157,841h1v1h-1zM167,841h1v1h-1zM177,841h1v1h-1zM187,841h1v1h-1zM197,841h1v1h-1zM207,841h1v1h-1zM217,841h1v1h-1zM227,841h1v1h-1zM237,841h1v1h-1zM247,841h1v1h-1zM257,841h1v1h-1zM268,841h1v1h-1zM278,841h1v1h-1zM288,841h1v1h-1zM298,841h1v1h-1zM308,841h1v1h-1zM318,841h1v1h-1zM328,841h1v1h-1zM338,841h1v1h-1zM348,841h1v1h-1zM358,841h1v1h-1zM368,841h1v1h-1zM378,841h1v1h-1zM388,841h1v1h-1zM398,841h1v1h-1zM408,841h1v1h-1zM418,841h1v1h-1zM429,841h1v1h-1zM439,841h1v1h-1zM449,841h1v1h-1zM459,841h1v1h-1zM469,841h1v1h-1zM479,841h1v1h-1zM489,841h1v1h-1zM499,841h1v1h-1zM509,841h1v1h-1zM519,841h1v1h-1zM529,841h1v1h-1zM539,841h1v1h-1zM549,841h1v1h-1zM559,841h1v1h-1zM569,841h1v1h-1zM580,841h1v1h-1zM590,841h1v1h-1zM600,841h1v1h-1zM610,841h1v1h-1zM620,841h1v1h-1zM630,841h1v1h-1zM640,841h1v1h-1zM650,841h1v1h-1zM660,841h1v1h-1zM670,841h1v1h-1zM680,841h1v1h-1zM690,841h1v1h-1zM700,841h1v1h-1zM710,841h1v1h-1zM720,841h1v1h-1zM731,841h1v1h-1zM741,841h1v1h-1zM751,841h1v1h-1zM761,841h1v1h-1zM771,841h1v1h-1zM781,841h1v1h-1zM791,841h1v1h-1zM801,841h1v1h-1zM811,841h1v1h-1zM821,841h1v1h-1zM831,841h1v1h-1zM841,841h1v1h-1zM851,841h1v1h-1zM861,841h1v1h-1zM871,841h1v1h-1zM882,841h1v1h-1zM892,841h1v1h-1zM902,841h1v1h-1zM912,841h1v1h-1zM922,841h1v1h-1zM932,841h1v1h-1zM942,841h1v1h-1zM952,841h1v1h-1zM962,841h1v1h-1zM972,841h1v1h-1zM982,841h1v1h-1zM992,841h1v1h-1zM1002,841h1v1h-1zM1012,841h1v1h-1zM1022,841h1v1h-1zM1033,841h1v1h-1zM1043,841h1v1h-1zM1053,841h1v1h-1zM16,852h1v1h-1zM26,852h1v1h-1zM36,852h1v1h-1zM46,852h1v1h-1zM56,852h1v1h-1zM66,852h1v1h-1zM76,852h1v1h-1zM86,852h1v1h-1zM96,852h1v1h-1zM106,852h1v1h-1zM117,852h1v1h-1zM127,852h1v1h-1zM137,852h1v1h-1zM147,852h1v1h-1zM157,852h1v1h-1zM167,852h1v1h-1zM177,852h1v1h-1zM187,852h1v1h-1zM197,852h1v1h-1zM207,852h1v1h-1zM217,852h1v1h-1zM227,852h1v1h-1zM237,852h1v1h-1zM247,852h1v1h-1zM257,852h1v1h-1zM268,852h1v1h-1zM278,852h1v1h-1zM288,852h1v1h-1zM298,852h1v1h-1zM308,852h1v1h-1zM318,852h1v1h-1zM328,852h1v1h-1zM338,852h1v1h-1zM348,852h1v1h-1zM358,852h1v1h-1zM368,852h1v1h-1zM378,852h1v1h-1zM388,852h1v1h-1zM398,852h1v1h-1zM408,852h1v1h-1zM418,852h1v1h-1zM429,852h1v1h-1zM439,852h1v1h-1zM449,852h1v1h-1zM459,852h1v1h-1zM469,852h1v1h-1zM479,852h1v1h-1zM489,852h1v1h-1zM499,852h1v1h-1zM509,852h1v1h-1zM519,852h1v1h-1zM529,852h1v1h-1zM539,852h1v1h-1zM549,852h1v1h-1zM559,852h1v1h-1zM569,852h1v1h-1zM580,852h1v1h-1zM590,852h1v1h-1zM600,852h1v1h-1zM610,852h1v1h-1zM620,852h1v1h-1zM630,852h1v1h-1zM640,852h1v1h-1zM650,852h1v1h-1zM660,852h1v1h-1zM670,852h1v1h-1zM680,852h1v1h-1zM690,852h1v1h-1zM700,852h1v1h-1zM710,852h1v1h-1zM720,852h1v1h-1zM731,852h1v1h-1zM741,852h1v1h-1zM751,852h1v1h-1zM761,852h1v1h-1zM771,852h1v1h-1zM781,852h1v1h-1zM791,852h1v1h-1zM801,852h1v1h-1zM811,852h1v1h-1zM821,852h1v1h-1zM831,852h1v1h-1zM841,852h1v1h-1zM851,852h1v1h-1zM861,852h1v1h-1zM871,852h1v1h-1zM882,852h1v1h-1zM892,852h1v1h-1zM902,852h1v1h-1zM912,852h1v1h-1zM922,852h1v1h-1zM932,852h1v1h-1zM942,852h1v1h-1zM952,852h1v1h-1zM962,852h1v1h-1zM972,852h1v1h-1zM982,852h1v1h-1zM992,852h1v1h-1zM1002,852h1v1h-1zM1012,852h1v1h-1zM1022,852h1v1h-1zM1033,852h1v1h-1zM1043,852h1v1h-1zM1053,852h1v1h-1zM16,862h1v1h-1zM26,862h1v1h-1zM36,862h1v1h-1zM46,862h1v1h-1zM56,862h1v1h-1zM66,862h1v1h-1zM76,862h1v1h-1zM86,862h1v1h-1zM96,862h1v1h-1zM106,862h1v1h-1zM117,862h1v1h-1zM127,862h1v1h-1zM137,862h1v1h-1zM147,862h1v1h-1zM157,862h1v1h-1zM167,862h1v1h-1zM177,862h1v1h-1zM187,862h1v1h-1zM197,862h1v1h-1zM207,862h1v1h-1zM217,862h1v1h-1zM227,862h1v1h-1zM237,862h1v1h-1zM247,862h1v1h-1zM257,862h1v1h-1zM268,862h1v1h-1zM278,862h1v1h-1zM288,862h1v1h-1zM298,862h1v1h-1zM308,862h1v1h-1zM318,862h1v1h-1zM328,862h1v1h-1zM338,862h1v1h-1zM348,862h1v1h-1zM358,862h1v1h-1zM368,862h1v1h-1zM378,862h1v1h-1zM388,862h1v1h-1zM398,862h1v1h-1zM408,862h1v1h-1zM418,862h1v1h-1zM429,862h1v1h-1zM439,862h1v1h-1zM449,862h1v1h-1zM459,862h1v1h-1zM469,862h1v1h-1zM479,862h1v1h-1zM489,862h1v1h-1zM499,862h1v1h-1zM509,862h1v1h-1zM519,862h1v1h-1zM529,862h1v1h-1zM539,862h1v1h-1zM549,862h1v1h-1zM559,862h1v1h-1zM569,862h1v1h-1zM580,862h1v1h-1zM590,862h1v1h-1zM600,862h1v1h-1zM610,862h1v1h-1zM620,862h1v1h-1zM630,862h1v1h-1zM640,862h1v1h-1zM650,862h1v1h-1zM660,862h1v1h-1zM670,862h1v1h-1zM680,862h1v1h-1zM690,862h1v1h-1zM700,862h1v1h-1zM710,862h1v1h-1zM720,862h1v1h-1zM731,862h1v1h-1zM741,862h1v1h-1zM751,862h1v1h-1zM761,862h1v1h-1zM771,862h1v1h-1zM781,862h1v1h-1zM791,862h1v1h-1zM801,862h1v1h-1zM811,862h1v1h-1zM821,862h1v1h-1zM831,862h1v1h-1zM841,862h1v1h-1zM851,862h1v1h-1zM861,862h1v1h-1zM871,862h1v1h-1zM882,862h1v1h-1zM892,862h1v1h-1zM902,862h1v1h-1zM912,862h1v1h-1zM922,862h1v1h-1zM932,862h1v1h-1zM942,862h1v1h-1zM952,862h1v1h-1zM962,862h1v1h-1zM972,862h1v1h-1zM982,862h1v1h-1zM992,862h1v1h-1zM1002,862h1v1h-1zM1012,862h1v1h-1zM1022,862h1v1h-1zM1033,862h1v1h-1zM1043,862h1v1h-1zM1053,862h1v1h-1zM16,872h1v1h-1zM26,872h1v1h-1zM36,872h1v1h-1zM46,872h1v1h-1zM56,872h1v1h-1zM66,872h1v1h-1zM76,872h1v1h-1zM86,872h1v1h-1zM96,872h1v1h-1zM106,872h1v1h-1zM117,872h1v1h-1zM127,872h1v1h-1zM137,872h1v1h-1zM147,872h1v1h-1zM157,872h1v1h-1zM167,872h1v1h-1zM177,872h1v1h-1zM187,872h1v1h-1zM197,872h1v1h-1zM207,872h1v1h-1zM217,872h1v1h-1zM227,872h1v1h-1zM237,872h1v1h-1zM247,872h1v1h-1zM257,872h1v1h-1zM268,872h1v1h-1zM278,872h1v1h-1zM288,872h1v1h-1zM298,872h1v1h-1zM308,872h1v1h-1zM318,872h1v1h-1zM328,872h1v1h-1zM338,872h1v1h-1zM348,872h1v1h-1zM358,872h1v1h-1zM368,872h1v1h-1zM378,872h1v1h-1zM388,872h1v1h-1zM398,872h1v1h-1zM408,872h1v1h-1zM418,872h1v1h-1zM429,872h1v1h-1zM439,872h1v1h-1zM449,872h1v1h-1zM459,872h1v1h-1zM469,872h1v1h-1zM479,872h1v1h-1zM489,872h1v1h-1zM499,872h1v1h-1zM509,872h1v1h-1zM519,872h1v1h-1zM529,872h1v1h-1zM539,872h1v1h-1zM549,872h1v1h-1zM559,872h1v1h-1zM569,872h1v1h-1zM580,872h1v1h-1zM590,872h1v1h-1zM600,872h1v1h-1zM610,872h1v1h-1zM620,872h1v1h-1zM630,872h1v1h-1zM640,872h1v1h-1zM650,872h1v1h-1zM660,872h1v1h-1zM670,872h1v1h-1zM680,872h1v1h-1zM690,872h1v1h-1zM700,872h1v1h-1zM710,872h1v1h-1zM720,872h1v1h-1zM731,872h1v1h-1zM741,872h1v1h-1zM751,872h1v1h-1zM761,872h1v1h-1zM771,872h1v1h-1zM781,872h1v1h-1zM791,872h1v1h-1zM801,872h1v1h-1zM811,872h1v1h-1zM821,872h1v1h-1zM831,872h1v1h-1zM841,872h1v1h-1zM851,872h1v1h-1zM861,872h1v1h-1zM871,872h1v1h-1zM882,872h1v1h-1zM892,872h1v1h-1zM902,872h1v1h-1zM912,872h1v1h-1zM922,872h1v1h-1zM932,872h1v1h-1zM942,872h1v1h-1zM952,872h1v1h-1zM962,872h1v1h-1zM972,872h1v1h-1zM982,872h1v1h-1zM992,872h1v1h-1zM1002,872h1v1h-1zM1012,872h1v1h-1zM1022,872h1v1h-1zM1033,872h1v1h-1zM1043,872h1v1h-1zM1053,872h1v1h-1zM16,882h1v1h-1zM26,882h1v1h-1zM36,882h1v1h-1zM46,882h1v1h-1zM56,882h1v1h-1zM66,882h1v1h-1zM76,882h1v1h-1zM86,882h1v1h-1zM96,882h1v1h-1zM106,882h1v1h-1zM117,882h1v1h-1zM127,882h1v1h-1zM137,882h1v1h-1zM147,882h1v1h-1zM157,882h1v1h-1zM167,882h1v1h-1zM177,882h1v1h-1zM187,882h1v1h-1zM197,882h1v1h-1zM207,882h1v1h-1zM217,882h1v1h-1zM227,882h1v1h-1zM237,882h1v1h-1zM247,882h1v1h-1zM257,882h1v1h-1zM268,882h1v1h-1zM278,882h1v1h-1zM288,882h1v1h-1zM298,882h1v1h-1zM308,882h1v1h-1zM318,882h1v1h-1zM328,882h1v1h-1zM338,882h1v1h-1zM348,882h1v1h-1zM358,882h1v1h-1zM368,882h1v1h-1zM378,882h1v1h-1zM388,882h1v1h-1zM398,882h1v1h-1zM408,882h1v1h-1zM418,882h1v1h-1zM429,882h1v1h-1zM439,882h1v1h-1zM449,882h1v1h-1zM459,882h1v1h-1zM469,882h1v1h-1zM479,882h1v1h-1zM489,882h1v1h-1zM499,882h1v1h-1zM509,882h1v1h-1zM519,882h1v1h-1zM529,882h1v1h-1zM539,882h1v1h-1zM549,882h1v1h-1zM559,882h1v1h-1zM569,882h1v1h-1zM580,882h1v1h-1zM590,882h1v1h-1zM600,882h1v1h-1zM610,882h1v1h-1zM620,882h1v1h-1zM630,882h1v1h-1zM640,882h1v1h-1zM650,882h1v1h-1zM660,882h1v1h-1zM670,882h1v1h-1zM680,882h1v1h-1zM690,882h1v1h-1zM700,882h1v1h-1zM710,882h1v1h-1zM720,882h1v1h-1zM731,882h1v1h-1zM741,882h1v1h-1zM751,882h1v1h-1zM761,882h1v1h-1zM771,882h1v1h-1zM781,882h1v1h-1zM791,882h1v1h-1zM801,882h1v1h-1zM811,882h1v1h-1zM821,882h1v1h-1zM831,882h1v1h-1zM841,882h1v1h-1zM851,882h1v1h-1zM861,882h1v1h-1zM871,882h1v1h-1zM882,882h1v1h-1zM892,882h1v1h-1zM902,882h1v1h-1zM912,882h1v1h-1zM922,882h1v1h-1zM932,882h1v1h-1zM942,882h1v1h-1zM952,882h1v1h-1zM962,882h1v1h-1zM972,882h1v1h-1zM982,882h1v1h-1zM992,882h1v1h-1zM1002,882h1v1h-1zM1012,882h1v1h-1zM1022,882h1v1h-1zM1033,882h1v1h-1zM1043,882h1v1h-1zM1053,882h1v1h-1zM16,892h1v1h-1zM26,892h1v1h-1zM36,892h1v1h-1zM46,892h1v1h-1zM56,892h1v1h-1zM66,892h1v1h-1zM76,892h1v1h-1zM86,892h1v1h-1zM96,892h1v1h-1zM106,892h1v1h-1zM117,892h1v1h-1zM127,892h1v1h-1zM137,892h1v1h-1zM147,892h1v1h-1zM157,892h1v1h-1zM167,892h1v1h-1zM177,892h1v1h-1zM187,892h1v1h-1zM197,892h1v1h-1zM207,892h1v1h-1zM217,892h1v1h-1zM227,892h1v1h-1zM237,892h1v1h-1zM247,892h1v1h-1zM257,892h1v1h-1zM268,892h1v1h-1zM278,892h1v1h-1zM288,892h1v1h-1zM298,892h1v1h-1zM308,892h1v1h-1zM318,892h1v1h-1zM328,892h1v1h-1zM338,892h1v1h-1zM348,892h1v1h-1zM358,892h1v1h-1zM368,892h1v1h-1zM378,892h1v1h-1zM388,892h1v1h-1zM398,892h1v1h-1zM408,892h1v1h-1zM418,892h1v1h-1zM429,892h1v1h-1zM439,892h1v1h-1zM449,892h1v1h-1zM459,892h1v1h-1zM469,892h1v1h-1zM479,892h1v1h-1zM489,892h1v1h-1zM499,892h1v1h-1zM509,892h1v1h-1zM519,892h1v1h-1zM529,892h1v1h-1zM539,892h1v1h-1zM549,892h1v1h-1zM559,892h1v1h-1zM569,892h1v1h-1zM580,892h1v1h-1zM590,892h1v1h-1zM600,892h1v1h-1zM610,892h1v1h-1zM620,892h1v1h-1zM630,892h1v1h-1zM640,892h1v1h-1zM650,892h1v1h-1zM660,892h1v1h-1zM670,892h1v1h-1zM680,892h1v1h-1zM690,892h1v1h-1zM700,892h1v1h-1zM710,892h1v1h-1zM720,892h1v1h-1zM731,892h1v1h-1zM741,892h1v1h-1zM751,892h1v1h-1zM761,892h1v1h-1zM771,892h1v1h-1zM781,892h1v1h-1zM791,892h1v1h-1zM801,892h1v1h-1zM811,892h1v1h-1zM821,892h1v1h-1zM831,892h1v1h-1zM841,892h1v1h-1zM851,892h1v1h-1zM861,892h1v1h-1zM871,892h1v1h-1zM882,892h1v1h-1zM892,892h1v1h-1zM902,892h1v1h-1zM912,892h1v1h-1zM922,892h1v1h-1zM932,892h1v1h-1zM942,892h1v1h-1zM952,892h1v1h-1zM962,892h1v1h-1zM972,892h1v1h-1zM982,892h1v1h-1zM992,892h1v1h-1zM1002,892h1v1h-1zM1012,892h1v1h-1zM1022,892h1v1h-1zM1033,892h1v1h-1zM1043,892h1v1h-1zM1053,892h1v1h-1zM16,902h1v1h-1zM26,902h1v1h-1zM36,902h1v1h-1zM46,902h1v1h-1zM56,902h1v1h-1zM66,902h1v1h-1zM76,902h1v1h-1zM86,902h1v1h-1zM96,902h1v1h-1zM106,902h1v1h-1zM117,902h1v1h-1zM127,902h1v1h-1zM137,902h1v1h-1zM147,902h1v1h-1zM157,902h1v1h-1zM167,902h1v1h-1zM177,902h1v1h-1zM187,902h1v1h-1zM197,902h1v1h-1zM207,902h1v1h-1zM217,902h1v1h-1zM227,902h1v1h-1zM237,902h1v1h-1zM247,902h1v1h-1zM257,902h1v1h-1zM268,902h1v1h-1zM278,902h1v1h-1zM288,902h1v1h-1zM298,902h1v1h-1zM308,902h1v1h-1zM318,902h1v1h-1zM328,902h1v1h-1zM338,902h1v1h-1zM348,902h1v1h-1zM358,902h1v1h-1zM368,902h1v1h-1zM378,902h1v1h-1zM388,902h1v1h-1zM398,902h1v1h-1zM408,902h1v1h-1zM418,902h1v1h-1zM429,902h1v1h-1zM439,902h1v1h-1zM449,902h1v1h-1zM459,902h1v1h-1zM469,902h1v1h-1zM479,902h1v1h-1zM489,902h1v1h-1zM499,902h1v1h-1zM509,902h1v1h-1zM519,902h1v1h-1zM529,902h1v1h-1zM539,902h1v1h-1zM549,902h1v1h-1zM559,902h1v1h-1zM569,902h1v1h-1zM580,902h1v1h-1zM590,902h1v1h-1zM600,902h1v1h-1zM610,902h1v1h-1zM620,902h1v1h-1zM630,902h1v1h-1zM640,902h1v1h-1zM650,902h1v1h-1zM660,902h1v1h-1zM670,902h1v1h-1zM680,902h1v1h-1zM690,902h1v1h-1zM700,902h1v1h-1zM710,902h1v1h-1zM720,902h1v1h-1zM731,902h1v1h-1zM741,902h1v1h-1zM751,902h1v1h-1zM761,902h1v1h-1zM771,902h1v1h-1zM781,902h1v1h-1zM791,902h1v1h-1zM801,902h1v1h-1zM811,902h1v1h-1zM821,902h1v1h-1zM831,902h1v1h-1zM841,902h1v1h-1zM851,902h1v1h-1zM861,902h1v1h-1zM871,902h1v1h-1zM882,902h1v1h-1zM892,902h1v1h-1zM902,902h1v1h-1zM912,902h1v1h-1zM922,902h1v1h-1zM932,902h1v1h-1zM942,902h1v1h-1zM952,902h1v1h-1zM962,902h1v1h-1zM972,902h1v1h-1zM982,902h1v1h-1zM992,902h1v1h-1zM1002,902h1v1h-1zM1012,902h1v1h-1zM1022,902h1v1h-1zM1033,902h1v1h-1zM1043,902h1v1h-1zM1053,902h1v1h-1zM16,912h1v1h-1zM26,912h1v1h-1zM36,912h1v1h-1zM46,912h1v1h-1zM56,912h1v1h-1zM66,912h1v1h-1zM76,912h1v1h-1zM86,912h1v1h-1zM96,912h1v1h-1zM106,912h1v1h-1zM117,912h1v1h-1zM127,912h1v1h-1zM137,912h1v1h-1zM147,912h1v1h-1zM157,912h1v1h-1zM167,912h1v1h-1zM177,912h1v1h-1zM187,912h1v1h-1zM197,912h1v1h-1zM207,912h1v1h-1zM217,912h1v1h-1zM227,912h1v1h-1zM237,912h1v1h-1zM247,912h1v1h-1zM257,912h1v1h-1zM268,912h1v1h-1zM278,912h1v1h-1zM288,912h1v1h-1zM298,912h1v1h-1zM308,912h1v1h-1zM318,912h1v1h-1zM328,912h1v1h-1zM338,912h1v1h-1zM348,912h1v1h-1zM358,912h1v1h-1zM368,912h1v1h-1zM378,912h1v1h-1zM388,912h1v1h-1zM398,912h1v1h-1zM408,912h1v1h-1zM418,912h1v1h-1zM429,912h1v1h-1zM439,912h1v1h-1zM449,912h1v1h-1zM459,912h1v1h-1zM469,912h1v1h-1zM479,912h1v1h-1zM489,912h1v1h-1zM499,912h1v1h-1zM509,912h1v1h-1zM519,912h1v1h-1zM529,912h1v1h-1zM539,912h1v1h-1zM549,912h1v1h-1zM559,912h1v1h-1zM569,912h1v1h-1zM580,912h1v1h-1zM590,912h1v1h-1zM600,912h1v1h-1zM610,912h1v1h-1zM620,912h1v1h-1zM630,912h1v1h-1zM640,912h1v1h-1zM650,912h1v1h-1zM660,912h1v1h-1zM670,912h1v1h-1zM680,912h1v1h-1zM690,912h1v1h-1zM700,912h1v1h-1zM710,912h1v1h-1zM720,912h1v1h-1zM731,912h1v1h-1zM741,912h1v1h-1zM751,912h1v1h-1zM761,912h1v1h-1zM771,912h1v1h-1zM781,912h1v1h-1zM791,912h1v1h-1zM801,912h1v1h-1zM811,912h1v1h-1zM821,912h1v1h-1zM831,912h1v1h-1zM841,912h1v1h-1zM851,912h1v1h-1zM861,912h1v1h-1zM871,912h1v1h-1zM882,912h1v1h-1zM892,912h1v1h-1zM902,912h1v1h-1zM912,912h1v1h-1zM922,912h1v1h-1zM932,912h1v1h-1zM942,912h1v1h-1zM952,912h1v1h-1zM962,912h1v1h-1zM972,912h1v1h-1zM982,912h1v1h-1zM992,912h1v1h-1zM1002,912h1v1h-1zM1012,912h1v1h-1zM1022,912h1v1h-1zM1033,912h1v1h-1zM1043,912h1v1h-1zM1053,912h1v1h-1zM16,922h1v1h-1zM26,922h1v1h-1zM36,922h1v1h-1zM46,922h1v1h-1zM56,922h1v1h-1zM66,922h1v1h-1zM76,922h1v1h-1zM86,922h1v1h-1zM96,922h1v1h-1zM106,922h1v1h-1zM117,922h1v1h-1zM127,922h1v1h-1zM137,922h1v1h-1zM147,922h1v1h-1zM157,922h1v1h-1zM167,922h1v1h-1zM177,922h1v1h-1zM187,922h1v1h-1zM197,922h1v1h-1zM207,922h1v1h-1zM217,922h1v1h-1zM227,922h1v1h-1zM237,922h1v1h-1zM247,922h1v1h-1zM257,922h1v1h-1zM268,922h1v1h-1zM278,922h1v1h-1zM288,922h1v1h-1zM298,922h1v1h-1zM308,922h1v1h-1zM318,922h1v1h-1zM328,922h1v1h-1zM338,922h1v1h-1zM348,922h1v1h-1zM358,922h1v1h-1zM368,922h1v1h-1zM378,922h1v1h-1zM388,922h1v1h-1zM398,922h1v1h-1zM408,922h1v1h-1zM418,922h1v1h-1zM429,922h1v1h-1zM439,922h1v1h-1zM449,922h1v1h-1zM459,922h1v1h-1zM469,922h1v1h-1zM479,922h1v1h-1zM489,922h1v1h-1zM499,922h1v1h-1zM509,922h1v1h-1zM519,922h1v1h-1zM529,922h1v1h-1zM539,922h1v1h-1zM549,922h1v1h-1zM559,922h1v1h-1zM569,922h1v1h-1zM580,922h1v1h-1zM590,922h1v1h-1zM600,922h1v1h-1zM610,922h1v1h-1zM620,922h1v1h-1zM630,922h1v1h-1zM640,922h1v1h-1zM650,922h1v1h-1zM660,922h1v1h-1zM670,922h1v1h-1zM680,922h1v1h-1zM690,922h1v1h-1zM700,922h1v1h-1zM710,922h1v1h-1zM720,922h1v1h-1zM731,922h1v1h-1zM741,922h1v1h-1zM751,922h1v1h-1zM761,922h1v1h-1zM771,922h1v1h-1zM781,922h1v1h-1zM791,922h1v1h-1zM801,922h1v1h-1zM811,922h1v1h-1zM821,922h1v1h-1zM831,922h1v1h-1zM841,922h1v1h-1zM851,922h1v1h-1zM861,922h1v1h-1zM871,922h1v1h-1zM882,922h1v1h-1zM892,922h1v1h-1zM902,922h1v1h-1zM912,922h1v1h-1zM922,922h1v1h-1zM932,922h1v1h-1zM942,922h1v1h-1zM952,922h1v1h-1zM962,922h1v1h-1zM972,922h1v1h-1zM982,922h1v1h-1zM992,922h1v1h-1zM1002,922h1v1h-1zM1012,922h1v1h-1zM1022,922h1v1h-1zM1033,922h1v1h-1zM1043,922h1v1h-1zM1053,922h1v1h-1zM16,932h1v1h-1zM26,932h1v1h-1zM36,932h1v1h-1zM46,932h1v1h-1zM56,932h1v1h-1zM66,932h1v1h-1zM76,932h1v1h-1zM86,932h1v1h-1zM96,932h1v1h-1zM106,932h1v1h-1zM117,932h1v1h-1zM127,932h1v1h-1zM137,932h1v1h-1zM147,932h1v1h-1zM157,932h1v1h-1zM167,932h1v1h-1zM177,932h1v1h-1zM187,932h1v1h-1zM197,932h1v1h-1zM207,932h1v1h-1zM217,932h1v1h-1zM227,932h1v1h-1zM237,932h1v1h-1zM247,932h1v1h-1zM257,932h1v1h-1zM268,932h1v1h-1zM278,932h1v1h-1zM288,932h1v1h-1zM298,932h1v1h-1zM308,932h1v1h-1zM318,932h1v1h-1zM328,932h1v1h-1zM338,932h1v1h-1zM348,932h1v1h-1zM358,932h1v1h-1zM368,932h1v1h-1zM378,932h1v1h-1zM388,932h1v1h-1zM398,932h1v1h-1zM408,932h1v1h-1zM418,932h1v1h-1zM429,932h1v1h-1zM439,932h1v1h-1zM449,932h1v1h-1zM459,932h1v1h-1zM469,932h1v1h-1zM479,932h1v1h-1zM489,932h1v1h-1zM499,932h1v1h-1zM509,932h1v1h-1zM519,932h1v1h-1zM529,932h1v1h-1zM539,932h1v1h-1zM549,932h1v1h-1zM559,932h1v1h-1zM569,932h1v1h-1zM580,932h1v1h-1zM590,932h1v1h-1zM600,932h1v1h-1zM610,932h1v1h-1zM620,932h1v1h-1zM630,932h1v1h-1zM640,932h1v1h-1zM650,932h1v1h-1zM660,932h1v1h-1zM670,932h1v1h-1zM680,932h1v1h-1zM690,932h1v1h-1zM700,932h1v1h-1zM710,932h1v1h-1zM720,932h1v1h-1zM731,932h1v1h-1zM741,932h1v1h-1zM751,932h1v1h-1zM761,932h1v1h-1zM771,932h1v1h-1zM781,932h1v1h-1zM791,932h1v1h-1zM801,932h1v1h-1zM811,932h1v1h-1zM821,932h1v1h-1zM831,932h1v1h-1zM841,932h1v1h-1zM851,932h1v1h-1zM861,932h1v1h-1zM871,932h1v1h-1zM882,932h1v1h-1zM892,932h1v1h-1zM902,932h1v1h-1zM912,932h1v1h-1zM922,932h1v1h-1zM932,932h1v1h-1zM942,932h1v1h-1zM952,932h1v1h-1zM962,932h1v1h-1zM972,932h1v1h-1zM982,932h1v1h-1zM992,932h1v1h-1zM1002,932h1v1h-1zM1012,932h1v1h-1zM1022,932h1v1h-1zM1033,932h1v1h-1zM1043,932h1v1h-1zM1053,932h1v1h-1zM16,942h1v1h-1zM26,942h1v1h-1zM36,942h1v1h-1zM46,942h1v1h-1zM56,942h1v1h-1zM66,942h1v1h-1zM76,942h1v1h-1zM86,942h1v1h-1zM96,942h1v1h-1zM106,942h1v1h-1zM117,942h1v1h-1zM127,942h1v1h-1zM137,942h1v1h-1zM147,942h1v1h-1zM157,942h1v1h-1zM167,942h1v1h-1zM177,942h1v1h-1zM187,942h1v1h-1zM197,942h1v1h-1zM207,942h1v1h-1zM217,942h1v1h-1zM227,942h1v1h-1zM237,942h1v1h-1zM247,942h1v1h-1zM257,942h1v1h-1zM268,942h1v1h-1zM278,942h1v1h-1zM288,942h1v1h-1zM298,942h1v1h-1zM308,942h1v1h-1zM318,942h1v1h-1zM328,942h1v1h-1zM338,942h1v1h-1zM348,942h1v1h-1zM358,942h1v1h-1zM368,942h1v1h-1zM378,942h1v1h-1zM388,942h1v1h-1zM398,942h1v1h-1zM408,942h1v1h-1zM418,942h1v1h-1zM429,942h1v1h-1zM439,942h1v1h-1zM449,942h1v1h-1zM459,942h1v1h-1zM469,942h1v1h-1zM479,942h1v1h-1zM489,942h1v1h-1zM499,942h1v1h-1zM509,942h1v1h-1zM519,942h1v1h-1zM529,942h1v1h-1zM539,942h1v1h-1zM549,942h1v1h-1zM559,942h1v1h-1zM569,942h1v1h-1zM580,942h1v1h-1zM590,942h1v1h-1zM600,942h1v1h-1zM610,942h1v1h-1zM620,942h1v1h-1zM630,942h1v1h-1zM640,942h1v1h-1zM650,942h1v1h-1zM660,942h1v1h-1zM670,942h1v1h-1zM680,942h1v1h-1zM690,942h1v1h-1zM700,942h1v1h-1zM710,942h1v1h-1zM720,942h1v1h-1zM731,942h1v1h-1zM741,942h1v1h-1zM751,942h1v1h-1zM761,942h1v1h-1zM771,942h1v1h-1zM781,942h1v1h-1zM791,942h1v1h-1zM801,942h1v1h-1zM811,942h1v1h-1zM821,942h1v1h-1zM831,942h1v1h-1zM841,942h1v1h-1zM851,942h1v1h-1zM861,942h1v1h-1zM871,942h1v1h-1zM882,942h1v1h-1zM892,942h1v1h-1zM902,942h1v1h-1zM912,942h1v1h-1zM922,942h1v1h-1zM932,942h1v1h-1zM942,942h1v1h-1zM952,942h1v1h-1zM962,942h1v1h-1zM972,942h1v1h-1zM982,942h1v1h-1zM992,942h1v1h-1zM1002,942h1v1h-1zM1012,942h1v1h-1zM1022,942h1v1h-1zM1033,942h1v1h-1zM1043,942h1v1h-1zM1053,942h1v1h-1zM16,952h1v1h-1zM26,952h1v1h-1zM36,952h1v1h-1zM46,952h1v1h-1zM56,952h1v1h-1zM66,952h1v1h-1zM76,952h1v1h-1zM86,952h1v1h-1zM96,952h1v1h-1zM106,952h1v1h-1zM117,952h1v1h-1zM127,952h1v1h-1zM137,952h1v1h-1zM147,952h1v1h-1zM157,952h1v1h-1zM167,952h1v1h-1zM177,952h1v1h-1zM187,952h1v1h-1zM197,952h1v1h-1zM207,952h1v1h-1zM217,952h1v1h-1zM227,952h1v1h-1zM237,952h1v1h-1zM247,952h1v1h-1zM257,952h1v1h-1zM268,952h1v1h-1zM278,952h1v1h-1zM288,952h1v1h-1zM298,952h1v1h-1zM308,952h1v1h-1zM318,952h1v1h-1zM328,952h1v1h-1zM338,952h1v1h-1zM348,952h1v1h-1zM358,952h1v1h-1zM368,952h1v1h-1zM378,952h1v1h-1zM388,952h1v1h-1zM398,952h1v1h-1zM408,952h1v1h-1zM418,952h1v1h-1zM429,952h1v1h-1zM439,952h1v1h-1zM449,952h1v1h-1zM459,952h1v1h-1zM469,952h1v1h-1zM479,952h1v1h-1zM489,952h1v1h-1zM499,952h1v1h-1zM509,952h1v1h-1zM519,952h1v1h-1zM529,952h1v1h-1zM539,952h1v1h-1zM549,952h1v1h-1zM559,952h1v1h-1zM569,952h1v1h-1zM580,952h1v1h-1zM590,952h1v1h-1zM600,952h1v1h-1zM610,952h1v1h-1zM620,952h1v1h-1zM630,952h1v1h-1zM640,952h1v1h-1zM650,952h1v1h-1zM660,952h1v1h-1zM670,952h1v1h-1zM680,952h1v1h-1zM690,952h1v1h-1zM700,952h1v1h-1zM710,952h1v1h-1zM720,952h1v1h-1zM731,952h1v1h-1zM741,952h1v1h-1zM751,952h1v1h-1zM761,952h1v1h-1zM771,952h1v1h-1zM781,952h1v1h-1zM791,952h1v1h-1zM801,952h1v1h-1zM811,952h1v1h-1zM821,952h1v1h-1zM831,952h1v1h-1zM841,952h1v1h-1zM851,952h1v1h-1zM861,952h1v1h-1zM871,952h1v1h-1zM882,952h1v1h-1zM892,952h1v1h-1zM902,952h1v1h-1zM912,952h1v1h-1zM922,952h1v1h-1zM932,952h1v1h-1zM942,952h1v1h-1zM952,952h1v1h-1zM962,952h1v1h-1zM972,952h1v1h-1zM982,952h1v1h-1zM992,952h1v1h-1zM1002,952h1v1h-1zM1012,952h1v1h-1zM1022,952h1v1h-1zM1033,952h1v1h-1zM1043,952h1v1h-1zM1053,952h1v1h-1zM16,963h1v1h-1zM26,963h1v1h-1zM36,963h1v1h-1zM46,963h1v1h-1zM56,963h1v1h-1zM66,963h1v1h-1zM76,963h1v1h-1zM86,963h1v1h-1zM96,963h1v1h-1zM106,963h1v1h-1zM117,963h1v1h-1zM127,963h1v1h-1zM137,963h1v1h-1zM147,963h1v1h-1zM157,963h1v1h-1zM167,963h1v1h-1zM177,963h1v1h-1zM187,963h1v1h-1zM197,963h1v1h-1zM207,963h1v1h-1zM217,963h1v1h-1zM227,963h1v1h-1zM237,963h1v1h-1zM247,963h1v1h-1zM257,963h1v1h-1zM268,963h1v1h-1zM278,963h1v1h-1zM288,963h1v1h-1zM298,963h1v1h-1zM308,963h1v1h-1zM318,963h1v1h-1zM328,963h1v1h-1zM338,963h1v1h-1zM348,963h1v1h-1zM358,963h1v1h-1zM368,963h1v1h-1zM378,963h1v1h-1zM388,963h1v1h-1zM398,963h1v1h-1zM408,963h1v1h-1zM418,963h1v1h-1zM429,963h1v1h-1zM439,963h1v1h-1zM449,963h1v1h-1zM459,963h1v1h-1zM469,963h1v1h-1zM479,963h1v1h-1zM489,963h1v1h-1zM499,963h1v1h-1zM509,963h1v1h-1zM519,963h1v1h-1zM529,963h1v1h-1zM539,963h1v1h-1zM549,963h1v1h-1zM559,963h1v1h-1zM569,963h1v1h-1zM580,963h1v1h-1zM590,963h1v1h-1zM600,963h1v1h-1zM610,963h1v1h-1zM620,963h1v1h-1zM630,963h1v1h-1zM640,963h1v1h-1zM650,963h1v1h-1zM660,963h1v1h-1zM670,963h1v1h-1zM680,963h1v1h-1zM690,963h1v1h-1zM700,963h1v1h-1zM710,963h1v1h-1zM720,963h1v1h-1zM731,963h1v1h-1zM741,963h1v1h-1zM751,963h1v1h-1zM761,963h1v1h-1zM771,963h1v1h-1zM781,963h1v1h-1zM791,963h1v1h-1zM801,963h1v1h-1zM811,963h1v1h-1zM821,963h1v1h-1zM831,963h1v1h-1zM841,963h1v1h-1zM851,963h1v1h-1zM861,963h1v1h-1zM871,963h1v1h-1zM882,963h1v1h-1zM892,963h1v1h-1zM902,963h1v1h-1zM912,963h1v1h-1zM922,963h1v1h-1zM932,963h1v1h-1zM942,963h1v1h-1zM952,963h1v1h-1zM962,963h1v1h-1zM972,963h1v1h-1zM982,963h1v1h-1zM992,963h1v1h-1zM1002,963h1v1h-1zM1012,963h1v1h-1zM1022,963h1v1h-1zM1033,963h1v1h-1zM1043,963h1v1h-1zM1053,963h1v1h-1zM16,973h1v1h-1zM26,973h1v1h-1zM36,973h1v1h-1zM46,973h1v1h-1zM56,973h1v1h-1zM66,973h1v1h-1zM76,973h1v1h-1zM86,973h1v1h-1zM96,973h1v1h-1zM106,973h1v1h-1zM117,973h1v1h-1zM127,973h1v1h-1zM137,973h1v1h-1zM147,973h1v1h-1zM157,973h1v1h-1zM167,973h1v1h-1zM177,973h1v1h-1zM187,973h1v1h-1zM197,973h1v1h-1zM207,973h1v1h-1zM217,973h1v1h-1zM227,973h1v1h-1zM237,973h1v1h-1zM247,973h1v1h-1zM257,973h1v1h-1zM268,973h1v1h-1zM278,973h1v1h-1zM288,973h1v1h-1zM298,973h1v1h-1zM308,973h1v1h-1zM318,973h1v1h-1zM328,973h1v1h-1zM338,973h1v1h-1zM348,973h1v1h-1zM358,973h1v1h-1zM368,973h1v1h-1zM378,973h1v1h-1zM388,973h1v1h-1zM398,973h1v1h-1zM408,973h1v1h-1zM418,973h1v1h-1zM429,973h1v1h-1zM439,973h1v1h-1zM449,973h1v1h-1zM459,973h1v1h-1zM469,973h1v1h-1zM479,973h1v1h-1zM489,973h1v1h-1zM499,973h1v1h-1zM509,973h1v1h-1zM519,973h1v1h-1zM529,973h1v1h-1zM539,973h1v1h-1zM549,973h1v1h-1zM559,973h1v1h-1zM569,973h1v1h-1zM580,973h1v1h-1zM590,973h1v1h-1zM600,973h1v1h-1zM610,973h1v1h-1zM620,973h1v1h-1zM630,973h1v1h-1zM640,973h1v1h-1zM650,973h1v1h-1zM660,973h1v1h-1zM670,973h1v1h-1zM680,973h1v1h-1zM690,973h1v1h-1zM700,973h1v1h-1zM710,973h1v1h-1zM720,973h1v1h-1zM731,973h1v1h-1zM741,973h1v1h-1zM751,973h1v1h-1zM761,973h1v1h-1zM771,973h1v1h-1zM781,973h1v1h-1zM791,973h1v1h-1zM801,973h1v1h-1zM811,973h1v1h-1zM821,973h1v1h-1zM831,973h1v1h-1zM841,973h1v1h-1zM851,973h1v1h-1zM861,973h1v1h-1zM871,973h1v1h-1zM882,973h1v1h-1zM892,973h1v1h-1zM902,973h1v1h-1zM912,973h1v1h-1zM922,973h1v1h-1zM932,973h1v1h-1zM942,973h1v1h-1zM952,973h1v1h-1zM962,973h1v1h-1zM972,973h1v1h-1zM982,973h1v1h-1zM992,973h1v1h-1zM1002,973h1v1h-1zM1012,973h1v1h-1zM1022,973h1v1h-1zM1033,973h1v1h-1zM1043,973h1v1h-1zM1053,973h1v1h-1zM16,983h1v1h-1zM26,983h1v1h-1zM36,983h1v1h-1zM46,983h1v1h-1zM56,983h1v1h-1zM66,983h1v1h-1zM76,983h1v1h-1zM86,983h1v1h-1zM96,983h1v1h-1zM106,983h1v1h-1zM117,983h1v1h-1zM127,983h1v1h-1zM137,983h1v1h-1zM147,983h1v1h-1zM157,983h1v1h-1zM167,983h1v1h-1zM177,983h1v1h-1zM187,983h1v1h-1zM197,983h1v1h-1zM207,983h1v1h-1zM217,983h1v1h-1zM227,983h1v1h-1zM237,983h1v1h-1zM247,983h1v1h-1zM257,983h1v1h-1zM268,983h1v1h-1zM278,983h1v1h-1zM288,983h1v1h-1zM298,983h1v1h-1zM308,983h1v1h-1zM318,983h1v1h-1zM328,983h1v1h-1zM338,983h1v1h-1zM348,983h1v1h-1zM358,983h1v1h-1zM368,983h1v1h-1zM378,983h1v1h-1zM388,983h1v1h-1zM398,983h1v1h-1zM408,983h1v1h-1zM418,983h1v1h-1zM429,983h1v1h-1zM439,983h1v1h-1zM449,983h1v1h-1zM459,983h1v1h-1zM469,983h1v1h-1zM479,983h1v1h-1zM489,983h1v1h-1zM499,983h1v1h-1zM509,983h1v1h-1zM519,983h1v1h-1zM529,983h1v1h-1zM539,983h1v1h-1zM549,983h1v1h-1zM559,983h1v1h-1zM569,983h1v1h-1zM580,983h1v1h-1zM590,983h1v1h-1zM600,983h1v1h-1zM610,983h1v1h-1zM620,983h1v1h-1zM630,983h1v1h-1zM640,983h1v1h-1zM650,983h1v1h-1zM660,983h1v1h-1zM670,983h1v1h-1zM680,983h1v1h-1zM690,983h1v1h-1zM700,983h1v1h-1zM710,983h1v1h-1zM720,983h1v1h-1zM731,983h1v1h-1zM741,983h1v1h-1zM751,983h1v1h-1zM761,983h1v1h-1zM771,983h1v1h-1zM781,983h1v1h-1zM791,983h1v1h-1zM801,983h1v1h-1zM811,983h1v1h-1zM821,983h1v1h-1zM831,983h1v1h-1zM841,983h1v1h-1zM851,983h1v1h-1zM861,983h1v1h-1zM871,983h1v1h-1zM882,983h1v1h-1zM892,983h1v1h-1zM902,983h1v1h-1zM912,983h1v1h-1zM922,983h1v1h-1zM932,983h1v1h-1zM942,983h1v1h-1zM952,983h1v1h-1zM962,983h1v1h-1zM972,983h1v1h-1zM982,983h1v1h-1zM992,983h1v1h-1zM1002,983h1v1h-1zM1012,983h1v1h-1zM1022,983h1v1h-1zM1033,983h1v1h-1zM1043,983h1v1h-1zM1053,983h1v1h-1zM16,993h1v1h-1zM26,993h1v1h-1zM36,993h1v1h-1zM46,993h1v1h-1zM56,993h1v1h-1zM66,993h1v1h-1zM76,993h1v1h-1zM86,993h1v1h-1zM96,993h1v1h-1zM106,993h1v1h-1zM117,993h1v1h-1zM127,993h1v1h-1zM137,993h1v1h-1zM147,993h1v1h-1zM157,993h1v1h-1zM167,993h1v1h-1zM177,993h1v1h-1zM187,993h1v1h-1zM197,993h1v1h-1zM207,993h1v1h-1zM217,993h1v1h-1zM227,993h1v1h-1zM237,993h1v1h-1zM247,993h1v1h-1zM257,993h1v1h-1zM268,993h1v1h-1zM278,993h1v1h-1zM288,993h1v1h-1zM298,993h1v1h-1zM308,993h1v1h-1zM318,993h1v1h-1zM328,993h1v1h-1zM338,993h1v1h-1zM348,993h1v1h-1zM358,993h1v1h-1zM368,993h1v1h-1zM378,993h1v1h-1zM388,993h1v1h-1zM398,993h1v1h-1zM408,993h1v1h-1zM418,993h1v1h-1zM429,993h1v1h-1zM439,993h1v1h-1zM449,993h1v1h-1zM459,993h1v1h-1zM469,993h1v1h-1zM479,993h1v1h-1zM489,993h1v1h-1zM499,993h1v1h-1zM509,993h1v1h-1zM519,993h1v1h-1zM529,993h1v1h-1zM539,993h1v1h-1zM549,993h1v1h-1zM559,993h1v1h-1zM569,993h1v1h-1zM580,993h1v1h-1zM590,993h1v1h-1zM600,993h1v1h-1zM610,993h1v1h-1zM620,993h1v1h-1zM630,993h1v1h-1zM640,993h1v1h-1zM650,993h1v1h-1zM660,993h1v1h-1zM670,993h1v1h-1zM680,993h1v1h-1zM690,993h1v1h-1zM700,993h1v1h-1zM710,993h1v1h-1zM720,993h1v1h-1zM731,993h1v1h-1zM741,993h1v1h-1zM751,993h1v1h-1zM761,993h1v1h-1zM771,993h1v1h-1zM781,993h1v1h-1zM791,993h1v1h-1zM801,993h1v1h-1zM811,993h1v1h-1zM821,993h1v1h-1zM831,993h1v1h-1zM841,993h1v1h-1zM851,993h1v1h-1zM861,993h1v1h-1zM871,993h1v1h-1zM882,993h1v1h-1zM892,993h1v1h-1zM902,993h1v1h-1zM912,993h1v1h-1zM922,993h1v1h-1zM932,993h1v1h-1zM942,993h1v1h-1zM952,993h1v1h-1zM962,993h1v1h-1zM972,993h1v1h-1zM982,993h1v1h-1zM992,993h1v1h-1zM1002,993h1v1h-1zM1012,993h1v1h-1zM1022,993h1v1h-1zM1033,993h1v1h-1zM1043,993h1v1h-1zM1053,993h1v1h-1z"/>
<g shape-rendering="crispEdges" stroke="#0000ff" fill="none">
<path d="M348.5,841.5 H520 M559,841.5 H591 M640,841.5 H903 M348.5,841.5 V907 M348.5,946 V973 M680.5,841.5 V867 M680.5,907 V973"/>
</g>
<rect x="677" y="838" width="7" height="7" fill="#0000ff" shape-rendering="crispEdges"/>
<g shape-rendering="crispEdges" fill="#000080"><rect x="537" y="831" width="1" height="22"/><rect x="542" y="831" width="1" height="22"/><rect x="520" y="841" width="17" height="1"/><rect x="543" y="841" width="16" height="1"/></g>
<path d="M590.5,841.5 Q591,852 600,852 C603.5,852 606,851.5 607.5,850 C611,846 610.5,835.5 608,834.5 C605.5,835.5 605,846 607.5,850 C610,852.5 612.5,852.5 615,852.5 C618,852.5 620,852 622.5,850 C626,846 625.5,835.5 623,834.5 C620.5,835.5 620,846 622.5,850 C625,852 628,852 631,852 Q640.5,852 640.5,841.5" fill="none" stroke="#000080" stroke-width="1" shape-rendering="crispEdges"/>
<polyline points="680.5,867 690.5,872 670.5,882.5 690.5,892.5 670.5,902.5 680.5,907" fill="none" stroke="#000080" stroke-width="1" shape-rendering="crispEdges"/>
<circle cx="348.5" cy="926.5" r="19.5" fill="none" stroke="#000080" stroke-width="1" shape-rendering="crispEdges"/>
<path d="M343,915.5 H354 M348.5,910.5 V921 M343,940.5 H354" stroke="#000080" stroke-width="1" shape-rendering="crispEdges"/>
<path d="M337.5,973.5 H359.5 L348.5,984 Z" fill="none" stroke="#0000ff" stroke-width="1" shape-rendering="crispEdges"/>
<path d="M669.5,973.5 H691.5 L680.5,984 Z" fill="none" stroke="#0000ff" stroke-width="1" shape-rendering="crispEdges"/>
<g font-size="14" font-weight="bold" fill="#000">
<text x="332.5" y="838" textLength="28.5" lengthAdjust="spacingAndGlyphs">Gen</text>
<text x="529.8" y="828" textLength="16.5" lengthAdjust="spacingAndGlyphs">C1</text>
<text x="520.2" y="865" textLength="35.5" lengthAdjust="spacingAndGlyphs">1.25n</text>
<text x="606.6" y="831" textLength="15.5" lengthAdjust="spacingAndGlyphs">L1</text>
<text x="605" y="864.5" textLength="19.5" lengthAdjust="spacingAndGlyphs">2m</text>
<text x="742" y="838" textLength="16" lengthAdjust="spacingAndGlyphs">F1</text>
<text x="692.7" y="882" textLength="17" lengthAdjust="spacingAndGlyphs">R1</text>
<text x="692.7" y="903.5" textLength="15.5" lengthAdjust="spacingAndGlyphs">47</text>
<text x="362.2" y="907" textLength="16" lengthAdjust="spacingAndGlyphs">V1</text>
<text x="221.8" y="964" textLength="297.5" lengthAdjust="spacingAndGlyphs">PULSE(-5 5 10µ 0.01n 0.01n 0.005m 0.01m 5)</text>
<text x="328.8" y="992.5" textLength="66.5" lengthAdjust="spacingAndGlyphs">.tran 0.1m</text>
</g>
</svg>
<svg width="1083" height="1007" style="position:absolute;left:0;top:0;will-change:transform"><g font-size="14" fill="#b4b4b4" stroke="#b4b4b4" stroke-width="0.35" text-anchor="end"><text x="41" y="49" textLength="15.53" lengthAdjust="spacingAndGlyphs">5V</text><text x="41" y="83" textLength="15.53" lengthAdjust="spacingAndGlyphs">4V</text><text x="41" y="117" textLength="15.53" lengthAdjust="spacingAndGlyphs">3V</text><text x="41" y="151" textLength="15.53" lengthAdjust="spacingAndGlyphs">2V</text><text x="41" y="185" textLength="15.53" lengthAdjust="spacingAndGlyphs">1V</text><text x="41" y="219" textLength="15.53" lengthAdjust="spacingAndGlyphs">0V</text><text x="41" y="252" textLength="20.18" lengthAdjust="spacingAndGlyphs">-1V</text><text x="41" y="286" textLength="20.18" lengthAdjust="spacingAndGlyphs">-2V</text><text x="41" y="320" textLength="20.18" lengthAdjust="spacingAndGlyphs">-3V</text><text x="41" y="354" textLength="20.18" lengthAdjust="spacingAndGlyphs">-4V</text><text x="41" y="388" textLength="20.18" lengthAdjust="spacingAndGlyphs">-5V</text><text x="41" y="409" textLength="27.20" lengthAdjust="spacingAndGlyphs">3.0V</text><text x="41" y="438" textLength="27.20" lengthAdjust="spacingAndGlyphs">2.5V</text><text x="41" y="466" textLength="27.20" lengthAdjust="spacingAndGlyphs">2.0V</text><text x="41" y="495" textLength="27.20" lengthAdjust="spacingAndGlyphs">1.5V</text><text x="41" y="523" textLength="27.20" lengthAdjust="spacingAndGlyphs">1.0V</text><text x="41" y="552" textLength="27.20" lengthAdjust="spacingAndGlyphs">0.5V</text><text x="41" y="581" textLength="27.20" lengthAdjust="spacingAndGlyphs">0.0V</text><text x="41" y="609" textLength="31.85" lengthAdjust="spacingAndGlyphs">-0.5V</text><text x="41" y="638" textLength="31.85" lengthAdjust="spacingAndGlyphs">-1.0V</text><text x="41" y="666" textLength="31.85" lengthAdjust="spacingAndGlyphs">-1.5V</text><text x="41" y="695" textLength="31.85" lengthAdjust="spacingAndGlyphs">-2.0V</text><text x="41" y="723" textLength="31.85" lengthAdjust="spacingAndGlyphs">-2.5V</text><text x="41" y="752" textLength="31.85" lengthAdjust="spacingAndGlyphs">-3.0V</text></g><g font-size="14" fill="#b4b4b4" stroke="#b4b4b4" stroke-width="0.35" text-anchor="middle"><text x="49.5" y="768">0µs</text><text x="149.5" y="768">10µs</text><text x="250.5" y="768">20µs</text><text x="350.5" y="768">30µs</text><text x="450.5" y="768">40µs</text><text x="551.5" y="768">50µs</text><text x="651.5" y="768">60µs</text><text x="751.5" y="768">70µs</text><text x="851.5" y="768">80µs</text><text x="952.5" y="768">90µs</text><text x="1052.5" y="768">100µs</text></g><text x="550" y="39" font-size="13.5" font-weight="bold" fill="#00ff00" text-anchor="middle" textLength="39.5" lengthAdjust="spacingAndGlyphs">V(gen)</text><text x="550" y="399" font-size="13.5" font-weight="bold" fill="#ff0000" text-anchor="middle" textLength="28.5" lengthAdjust="spacingAndGlyphs">V(f1)</text></svg>
</body></html>
